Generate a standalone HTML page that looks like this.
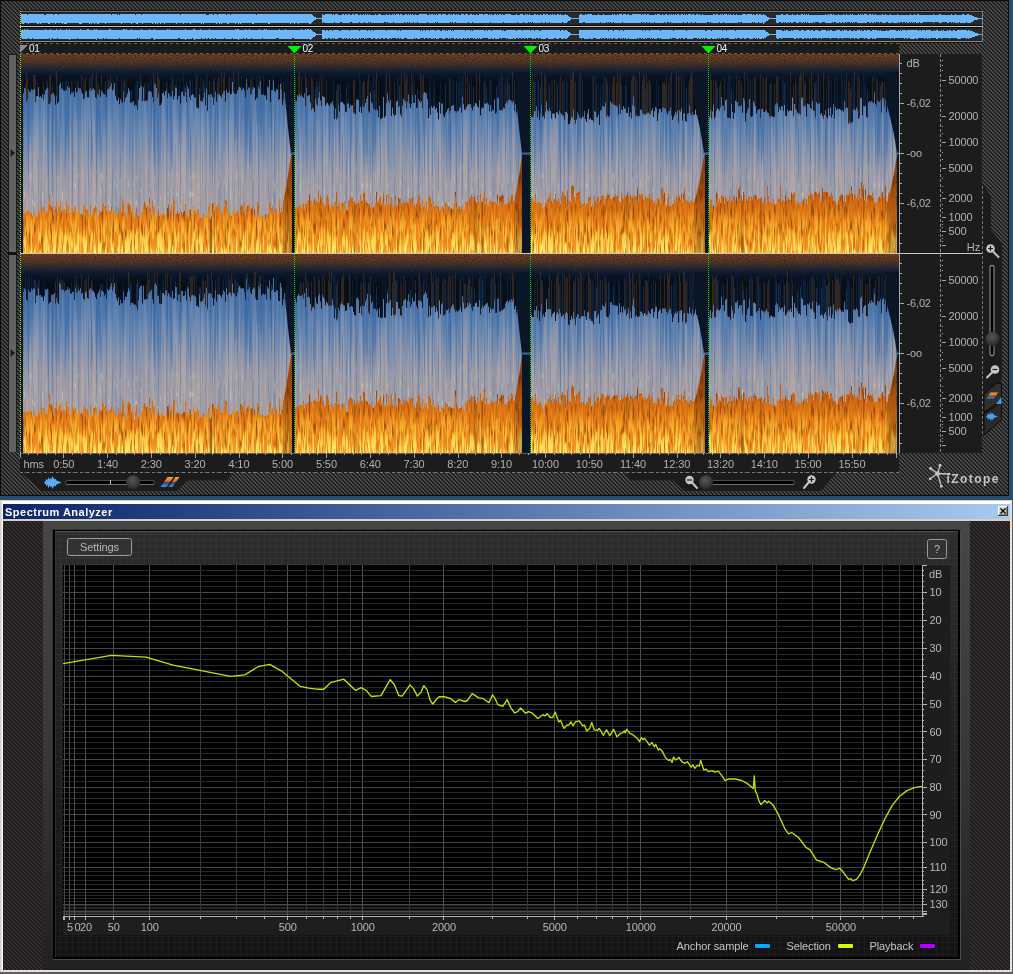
<!DOCTYPE html>
<html lang="en"><head><meta charset="utf-8"><title>Spectrum Analyzer</title>
<style>
html,body{margin:0;padding:0;}
body{width:1013px;height:974px;overflow:hidden;background:#2a4d6c;position:relative;font-family:"Liberation Sans",sans-serif;}
svg{position:absolute;left:0;display:block;opacity:0.999;}
svg text{font-family:"Liberation Sans",sans-serif;}
#top{top:0;}
#bot{top:500px;}
</style></head><body>
<svg id="top" width="1013" height="500" viewBox="0 0 1013 500"><defs><pattern id="hatch" width="4" height="4" patternUnits="userSpaceOnUse" shape-rendering="crispEdges"><rect width="4" height="4" fill="#1d1d1d"/><path d="M0 0h2v1h-2zM1 1h2v1h-2zM2 2h2v1h-2zM3 3h1v1h-1zM0 3h1v1h-1z" fill="#4b4b4b"/></pattern><radialGradient id="knob" cx="0.45" cy="0.35" r="0.7"><stop offset="0" stop-color="#565656"/><stop offset="0.7" stop-color="#343434"/><stop offset="1" stop-color="#1a1a1a"/></radialGradient><linearGradient id="sp" x1="0" y1="0" x2="0" y2="1"><stop offset="0" stop-color="#ffb020"/><stop offset="0.5" stop-color="#d06010"/><stop offset="0.55" stop-color="#2a4a80"/><stop offset="1" stop-color="#4a90e0"/></linearGradient><linearGradient id="gb" gradientUnits="userSpaceOnUse" x1="0" y1="0" x2="0" y2="199"><stop offset="0.18" stop-color="#416ea4"/><stop offset="0.3" stop-color="#4f78ab"/><stop offset="0.4" stop-color="#6685ae"/><stop offset="0.5" stop-color="#808fac"/><stop offset="0.6" stop-color="#9497a8"/><stop offset="0.72" stop-color="#a29ba4"/><stop offset="1" stop-color="#aca09e"/></linearGradient><linearGradient id="gl" gradientUnits="userSpaceOnUse" x1="0" y1="0" x2="0" y2="199"><stop offset="0.15" stop-color="#8aa0c4" stop-opacity="0.25"/><stop offset="0.3" stop-color="#98a2bc" stop-opacity="0.42"/><stop offset="0.45" stop-color="#aaa5b0" stop-opacity="0.62"/><stop offset="0.6" stop-color="#b4a7a8" stop-opacity="0.78"/><stop offset="1" stop-color="#bcaaa0" stop-opacity="0.82"/></linearGradient><linearGradient id="gbl" gradientUnits="userSpaceOnUse" x1="0" y1="0" x2="0" y2="199"><stop offset="0.15" stop-color="#305f9e" stop-opacity="0.7"/><stop offset="0.45" stop-color="#3a68a4" stop-opacity="0.65"/><stop offset="0.62" stop-color="#4673aa" stop-opacity="0.55"/><stop offset="0.8" stop-color="#5880b0" stop-opacity="0.42"/><stop offset="1" stop-color="#6286b2" stop-opacity="0.35"/></linearGradient><linearGradient id="gg" gradientUnits="userSpaceOnUse" x1="0" y1="0" x2="0" y2="199"><stop offset="0.48" stop-color="#c0dcc0" stop-opacity="0"/><stop offset="0.7" stop-color="#c0dcc0" stop-opacity="0.55"/><stop offset="1" stop-color="#c0dcc0" stop-opacity="0.6"/></linearGradient><linearGradient id="gf" gradientUnits="userSpaceOnUse" x1="0" y1="0" x2="0" y2="199"><stop offset="0.64" stop-color="#b4540e"/><stop offset="0.74" stop-color="#d06612"/><stop offset="0.84" stop-color="#e47816"/><stop offset="0.93" stop-color="#f08a1c"/><stop offset="1" stop-color="#f89c24"/></linearGradient><linearGradient id="gy" gradientUnits="userSpaceOnUse" x1="0" y1="0" x2="0" y2="199"><stop offset="0.7" stop-color="#ffb428" stop-opacity="0"/><stop offset="0.8" stop-color="#ffbc2c" stop-opacity="0.35"/><stop offset="0.9" stop-color="#ffd040" stop-opacity="0.85"/><stop offset="1" stop-color="#fff078" stop-opacity="1"/></linearGradient><linearGradient id="gd" gradientUnits="userSpaceOnUse" x1="0" y1="0" x2="0" y2="199"><stop offset="0.64" stop-color="#6e3004" stop-opacity="0.7"/><stop offset="0.9" stop-color="#823a06" stop-opacity="0.65"/><stop offset="1" stop-color="#984608" stop-opacity="0.5"/></linearGradient><linearGradient id="gt" gradientUnits="userSpaceOnUse" x1="0" y1="0" x2="0" y2="199"><stop offset="0" stop-color="#6c4326"/><stop offset="0.03" stop-color="#5f3c25"/><stop offset="0.055" stop-color="#40322b"/><stop offset="0.08" stop-color="#1b2438"/><stop offset="0.105" stop-color="#0a1628"/><stop offset="0.145" stop-color="#060e18"/><stop offset="0.4" stop-color="#07121f"/></linearGradient><filter id="nL" x="0" y="0" width="1" height="1" color-interpolation-filters="sRGB"><feTurbulence type="fractalNoise" baseFrequency="0.42 0.006" numOctaves="2" seed="4"/><feColorMatrix type="matrix" values="0 0 0 0 1 0 0 0 0 1 0 0 0 0 1 4.5 0 0 0 -1.85"/><feComposite in2="SourceGraphic" operator="arithmetic" k1="1" k2="0" k3="0" k4="0"/></filter><filter id="nB" x="0" y="0" width="1" height="1" color-interpolation-filters="sRGB"><feTurbulence type="fractalNoise" baseFrequency="0.5 0.008" numOctaves="2" seed="9"/><feColorMatrix type="matrix" values="0 0 0 0 1 0 0 0 0 1 0 0 0 0 1 0 5 0 0 -2.55"/><feComposite in2="SourceGraphic" operator="arithmetic" k1="1" k2="0" k3="0" k4="0"/></filter><filter id="nG" x="0" y="0" width="1" height="1" color-interpolation-filters="sRGB"><feTurbulence type="fractalNoise" baseFrequency="0.5 0.11" numOctaves="1" seed="21"/><feColorMatrix type="matrix" values="0 0 0 0 1 0 0 0 0 1 0 0 0 0 1 0 0 7 0 -4.4"/><feComposite in2="SourceGraphic" operator="arithmetic" k1="1" k2="0" k3="0" k4="0"/></filter><filter id="nY" x="0" y="0" width="1" height="1" color-interpolation-filters="sRGB"><feTurbulence type="fractalNoise" baseFrequency="0.55 0.045" numOctaves="2" seed="2"/><feColorMatrix type="matrix" values="0 0 0 0 1 0 0 0 0 1 0 0 0 0 1 5.5 0 0 0 -2.35"/><feComposite in2="SourceGraphic" operator="arithmetic" k1="1" k2="0" k3="0" k4="0"/></filter><filter id="nD" x="0" y="0" width="1" height="1" color-interpolation-filters="sRGB"><feTurbulence type="fractalNoise" baseFrequency="0.55 0.06" numOctaves="2" seed="13"/><feColorMatrix type="matrix" values="0 0 0 0 1 0 0 0 0 1 0 0 0 0 1 0 5 0 0 -2.6"/><feComposite in2="SourceGraphic" operator="arithmetic" k1="1" k2="0" k3="0" k4="0"/></filter><filter id="nS" x="0" y="0" width="1" height="1" color-interpolation-filters="sRGB"><feTurbulence type="fractalNoise" baseFrequency="0.9 0.9" numOctaves="1" seed="5"/><feColorMatrix type="matrix" values="0 0 0 0 1 0 0 0 0 1 0 0 0 0 1 6 0 0 0 -2.7"/><feComposite in2="SourceGraphic" operator="arithmetic" k1="1" k2="0" k3="0" k4="0"/></filter><linearGradient id="gs" gradientUnits="userSpaceOnUse" x1="0" y1="0" x2="0" y2="199"><stop offset="0" stop-color="#2a1608" stop-opacity="0.42"/><stop offset="0.06" stop-color="#1a1414" stop-opacity="0.4"/><stop offset="0.1" stop-color="#0a1424" stop-opacity="0.3"/><stop offset="0.13" stop-color="#0a1424" stop-opacity="0"/></linearGradient></defs><rect x="0" y="0" width="1009" height="496" fill="#0c0c0c"/><rect x="1" y="1" width="1007" height="494" fill="url(#hatch)"/><g shape-rendering="crispEdges"><rect x="20" y="10" width="963" height="33" fill="#141414"/><rect x="20" y="11" width="963" height="31" fill="#2a2a2a"/><rect x="20" y="11" width="963" height="1" fill="#747474"/><rect x="20" y="12" width="962" height="1" fill="#1c1c1c"/><rect x="20" y="24" width="962" height="1" fill="#222222"/><rect x="20" y="25" width="962" height="1" fill="#0c0c0c"/><rect x="20" y="26" width="962" height="1" fill="#c4c4c4"/><rect x="20" y="27" width="962" height="1" fill="#0c0c0c"/><rect x="20" y="28" width="962" height="1" fill="#222222"/><rect x="20" y="40" width="962" height="1" fill="#222222"/><rect x="20" y="41" width="963" height="1" fill="#8c8c8c"/><rect x="982" y="11" width="1" height="31" fill="#848484"/><path d="M21 18.6V13.9H22V13.7H23V13.8H24V14.3H25V14.2H26V13.7H27V14.5H28V13.8H29V13.8H30V14.1H31V14.2H32V14.2H33V14.3H34V14.1H35V14H36V14H37V13.6H38V13.8H39V13.9H40V13.6H41V14.3H42V14.4H43V13.9H44V14.5H45V14.5H46V14H47V14.1H48V13.7H49V13.9H50V14H51V14.1H52V14.3H53V14.5H54V14.3H55V13.9H56V14.3H57V14.2H58V14.5H59V13.8H60V14.4H61V14.3H62V13.7H63V14H64V13.7H65V13.9H66V13.8H67V14.4H68V14H69V14H70V13.7H71V14.2H72V14H73V14.4H74V14.2H75V14.2H76V14.4H77V13.8H78V14.2H79V13.6H80V14H81V14H82V13.9H83V13.9H84V14.4H85V14.1H86V14.3H87V14.1H88V14.4H89V13.6H90V14.3H91V13.9H92V14.2H93V13.7H94V13.9H95V14.4H96V13.7H97V13.6H98V13.7H99V14H100V14.4H101V14.3H102V13.7H103V14H104V14.3H105V13.7H106V13.9H107V14H108V14.2H109V14.1H110V14.3H111V14.5H112V13.7H113V14.1H114V14H115V14.2H116V13.8H117V14.5H118V14.2H119V14.5H120V14.4H121V13.6H122V13.9H123V14.1H124V14H125V13.7H126V14.2H127V14H128V13.9H129V14.2H130V14H131V13.8H132V13.7H133V14.4H134V13.7H135V14.5H136V13.8H137V13.8H138V14.4H139V14.1H140V13.8H141V14.5H142V13.9H143V13.8H144V14H145V13.8H146V14.3H147V14.3H148V14.2H149V14.3H150V14.2H151V13.6H152V14H153V14.2H154V14.3H155V13.6H156V14.1H157V13.6H158V14H159V14H160V13.7H161V13.8H162V14H163V14.1H164V13.7H165V14.1H166V13.7H167V14.4H168V14.1H169V14H170V13.6H171V14.3H172V13.8H173V13.9H174V13.9H175V13.9H176V13.6H177V14.2H178V14.1H179V14.3H180V14.5H181V14.3H182V13.7H183V13.7H184V14.4H185V14H186V14.1H187V14H188V13.9H189V14.2H190V13.6H191V14.1H192V13.9H193V13.9H194V14.3H195V14.4H196V14.1H197V13.8H198V13.8H199V13.8H200V14.4H201V13.7H202V13.8H203V13.7H204V14H205V13.7H206V14.5H207V14.5H208V14.5H209V14.3H210V14.3H211V14.3H212V14H213V14.5H214V14H215V14.4H216V13.9H217V14.5H218V14.2H219V13.7H220V14H221V13.8H222V13.9H223V14H224V14.3H225V14H226V14.5H227V13.8H228V13.6H229V13.7H230V14.5H231V14.2H232V14.2H233V14.4H234V13.9H235V13.8H236V14.2H237V13.7H238V13.8H239V14.4H240V13.8H241V13.7H242V14.3H243V14H244V13.9H245V14H246V14.4H247V13.9H248V13.9H249V13.8H250V13.8H251V14.2H252V13.9H253V13.7H254V13.7H255V14.4H256V14.5H257V13.9H258V14.3H259V14H260V13.6H261V14.2H262V14.3H263V14.1H264V13.9H265V14.4H266V14.2H267V14.4H268V13.9H269V13.8H270V14.2H271V14.2H272V14H273V14.3H274V14.3H275V14.2H276V14.1H277V14.4H278V13.8H279V14H280V14.2H281V14.4H282V13.8H283V14.4H284V14.4H285V14.4H286V14.4H287V13.7H288V14.3H289V14.2H290V13.8H291V13.9H292V14.3H293V14.1H294V13.7H295V14.2H296V13.9H297V14.4H298V13.8H299V13.8H300V13.8H301V13.9H302V14.2H303V14.4H304V14H305V13.8H306V14.3H307V14.3H308V14H309V13.8H310V13.5H311V14.3H312V15H313V15.8H314V16.6H315V17.3H316V18.1H317V18.1H318V18.1H319V18.1H320V18.1H321V18.1H322V14.1H323V14.8H324V14.7H325V14.2H326V14.3H327V14.3H328V14H329V14.1H330V14.1H331V14.2H332V14.5H333V14.3H334V14.7H335V14.2H336V14.2H337V14.3H338V14.5H339V14.6H340V14.5H341V14.9H342V14.1H343V14.4H344V14.6H345V14.4H346V14.3H347V14.6H348V14.2H349V14.1H350V14.6H351V14.8H352V14.2H353V14H354V14.8H355V14.3H356V14.2H357V14.1H358V14.8H359V14.8H360V14H361V14.8H362V14.7H363V14.4H364V14.5H365V14.2H366V14.7H367V14.1H368V14.7H369V14.2H370V14.8H371V14.5H372V14.9H373V14.6H374V14.6H375V14.3H376V14.5H377V14.8H378V14H379V14.1H380V14.1H381V14.7H382V14.5H383V14.7H384V14.8H385V14.9H386V14.4H387V14.8H388V14.7H389V14.1H390V14.5H391V14.7H392V14.3H393V14.7H394V14.4H395V14.6H396V14.4H397V14.3H398V14.4H399V14.5H400V14.2H401V14.1H402V14.7H403V14.8H404V14.8H405V14H406V14.1H407V14.7H408V14H409V14.7H410V14.4H411V14.5H412V14.1H413V14.9H414V14.6H415V14.4H416V14.8H417V14.7H418V14.5H419V14.1H420V14.2H421V14.2H422V14.2H423V14.3H424V14.1H425V14.3H426V14.2H427V14.6H428V14.7H429V14.2H430V14.8H431V14.1H432V14.4H433V14.6H434V14.1H435V14.8H436V14.4H437V14.8H438V14H439V14.4H440V14.2H441V14.6H442V14.2H443V14.3H444V14.3H445V14H446V14.5H447V14.5H448V14.3H449V14.1H450V14.6H451V14.3H452V14.7H453V14.4H454V14.2H455V14.8H456V14.2H457V14.9H458V14H459V14.5H460V14.5H461V14.3H462V14.4H463V14.2H464V14.8H465V14.4H466V14.4H467V14.1H468V14.9H469V14.5H470V14.3H471V14.4H472V14.8H473V14.4H474V14.7H475V14.7H476V14.1H477V14.7H478V14.5H479V14.2H480V14.3H481V14.4H482V14.2H483V14.5H484V14.3H485V14.2H486V14.3H487V14.3H488V14.5H489V14.4H490V14.5H491V14.2H492V14.6H493V14.5H494V14.2H495V14.4H496V14.6H497V14.2H498V14.6H499V14.1H500V14.2H501V14.5H502V14.3H503V14.9H504V14.5H505V14.1H506V14.4H507V14.4H508V14.3H509V14.3H510V14.4H511V14.5H512V14.7H513V14.6H514V14.6H515V14.5H516V14H517V14.6H518V14.5H519V14.6H520V14.4H521V14H522V14.1H523V14.6H524V14.7H525V14.1H526V14.5H527V14.3H528V14.8H529V14.1H530V14.6H531V14.5H532V14.7H533V14.5H534V14.2H535V14.2H536V14.5H537V14.2H538V14.5H539V14.6H540V14.4H541V14.7H542V14.6H543V14.3H544V14.2H545V14.8H546V14.2H547V14.2H548V14.5H549V14.8H550V14.3H551V14.7H552V14.3H553V14.6H554V14.3H555V14.7H556V14.5H557V14.4H558V14.3H559V14.7H560V14H561V14.6H562V14.6H563V14.7H564V14.8H565V13.9H566V14.6H567V15.3H568V16H569V16.7H570V17.4H571V18.1H572V18.1H573V18.1H574V18.1H575V18.1H576V18.1H577V18.1H578V18.1H579V14.5H580V14.2H581V14.3H582V14.7H583V14.8H584V14.6H585V14.2H586V14.5H587V14.1H588V14.3H589V14.3H590V14.2H591V14.2H592V14.6H593V14.7H594V14.5H595V14.5H596V14.8H597V14.5H598V14.3H599V14.8H600V14.8H601V14.7H602V14.6H603V14H604V14.9H605V14.7H606V14.8H607V14.5H608V14.9H609V14.5H610V14.8H611V14.7H612V14.2H613V14.7H614V14.3H615V14.5H616V14.5H617V14.2H618V14.8H619V14.1H620V14.1H621V14.3H622V14.9H623V14.3H624V14.4H625V14.2H626V14.7H627V14H628V14.1H629V14.8H630V14.6H631V14.9H632V14.2H633V14.1H634V14H635V14.3H636V14.3H637V14.3H638V14.4H639V14H640V14.4H641V14.6H642V14.4H643V14.9H644V14.2H645V14.3H646V14.5H647V14.1H648V14.2H649V14.6H650V14.8H651V14.8H652V14.7H653V14.6H654V14.5H655V14.1H656V14.6H657V14.1H658V14.3H659V14.1H660V14.5H661V14.9H662V14.2H663V14.7H664V14.8H665V14.2H666V14.3H667V14.7H668V14.7H669V14.1H670V14.7H671V14.3H672V14.8H673V14.2H674V14.8H675V14.4H676V14.9H677V14.4H678V14.1H679V14.8H680V14.7H681V14.2H682V14.4H683V14.6H684V14.3H685V14.5H686V14.1H687V14.6H688V14.2H689V14.3H690V14.2H691V14.6H692V14.2H693V14.3H694V14.6H695V14.9H696V14H697V14.3H698V14.7H699V14.2H700V14.6H701V14.5H702V14.1H703V14.5H704V14.6H705V14.6H706V14.8H707V14.7H708V14.7H709V14.7H710V14.8H711V14.5H712V14.7H713V14.2H714V14.1H715V14.7H716V14.4H717V14.4H718V14.8H719V14.8H720V14.1H721V14.5H722V14.2H723V14.8H724V14.4H725V14.1H726V14.1H727V14.9H728V14.4H729V14.6H730V14.2H731V14.8H732V14.7H733V14.2H734V14.5H735V14.5H736V14H737V14.6H738V14.9H739V14.5H740V14.8H741V14.8H742V14.4H743V14H744V14.4H745V14.3H746V14.6H747V14.4H748V14.2H749V14.4H750V14.2H751V14.4H752V14.7H753V14.4H754V14.5H755V14.8H756V14.3H757V14.2H758V14.8H759V14.4H760V14.2H761V14.5H762V14.7H763V13.9H764V14.6H765V15.3H766V16H767V16.7H768V17.4H769V18.1H770V18.1H771V18.1H772V18.1H773V18.1H774V18.1H775V18.1H776V14.8H777V14.6H778V14.5H779V14.6H780V15H781V14.4H782V14.3H783V15H784V14.9H785V14.9H786V14.3H787V14.3H788V15.1H789V14.8H790V14.9H791V14.7H792V14.3H793V15H794V14.9H795V14.7H796V14.6H797V14.4H798V14.7H799V15H800V14.8H801V14.2H802V14.4H803V15H804V14.4H805V14.8H806V14.4H807V15.1H808V14.3H809V15H810V14.7H811V14.5H812V14.6H813V15H814V15H815V14.8H816V15.1H817V14.9H818V15H819V14.7H820V14.8H821V14.6H822V14.8H823V15.1H824V14.8H825V14.4H826V14.9H827V14.7H828V14.4H829V14.7H830V14.3H831V14.3H832V14.8H833V14.4H834V14.9H835V15H836V14.7H837V14.6H838V14.3H839V15H840V14.5H841V14.7H842V15H843V14.2H844V14.5H845V15H846V14.3H847V15H848V15H849V14.8H850V14.3H851V15.1H852V14.3H853V14.5H854V15H855V14.6H856V14.7H857V14.6H858V14.4H859V14.5H860V14.2H861V15H862V14.4H863V14.7H864V14.4H865V14.3H866V14.2H867V14.9H868V14.7H869V14.3H870V14.2H871V14.8H872V14.3H873V14.7H874V14.8H875V14.4H876V14.7H877V14.7H878V14.8H879V14.7H880V15H881V15H882V14.4H883V14.6H884V14.5H885V14.4H886V14.9H887V14.9H888V14.8H889V14.8H890V14.4H891V14.8H892V14.8H893V14.5H894V14.9H895V15H896V14.5H897V14.4H898V14.8H899V14.5H900V15.1H901V14.7H902V14.6H903V14.9H904V14.8H905V14.6H906V14.6H907V15H908V14.5H909V15H910V14.2H911V14.9H912V14.9H913V14.9H914V14.2H915V14.8H916V14.6H917V14.2H918V14.2H919V15.1H920V14.6H921V14.6H922V14.5H923V14.8H924V14.8H925V15.1H926V15.1H927V14.6H928V15H929V14.9H930V14.8H931V15H932V15.1H933V14.3H934V14.7H935V14.9H936V14.5H937V15.1H938V14.9H939V14.2H940V14.3H941V14.5H942V15H943V14.8H944V15.1H945V14.9H946V15.1H947V15H948V14.5H949V15H950V15H951V14.3H952V14.8H953V14.8H954V15H955V14.4H956V14.5H957V14.6H958V14.5H959V15H960V14.9H961V14.6H962V14.2H963V14.4H964V14.5H965V14.6H966V15.1H967V14.3H968V14.1H969V14.5H970V14.9H971V15.3H972V15.7H973V16.1H974V16.5H975V16.9H976V17.3H977V17.7H978V18.1H979V18.1H980V18.1H981V18.1H982V18.6V18.8H981V18.9H980V19.2H979V19.3H978V19.7H977V19.9H976V20.1H975V20.4H974V21.3H973V21.8H972V21.7H971V22.5H970V22.6H969V23H968V22.9H967V21.8H966V22.5H965V22.5H964V23H963V23H962V22.8H961V22.6H960V22.1H959V22.5H958V22.9H957V22.7H956V22.6H955V21.9H954V22.7H953V22.4H952V22.6H951V22.2H950V22.2H949V22.6H948V22.5H947V22.4H946V22.1H945V21.9H944V22.3H943V22.4H942V22.7H941V23H940V23H939V22.1H938V22.3H937V22.4H936V22.4H935V22.3H934V22.9H933V22.4H932V22.2H931V22.1H930V22.2H929V22.3H928V22.3H927V22H926V21.8H925V22.4H924V22.3H923V22.7H922V22.5H921V22.7H920V21.9H919V23.2H918V23.3H917V22.6H916V22.3H915V23.2H914V22.2H913V22.5H912V22.2H911V23.1H910V22.1H909V22.8H908V22.5H907V22.4H906V22.8H905V22.4H904V22.3H903V22.5H902V22.2H901V22H900V22.7H899V22.1H898V22.9H897V23H896V22.5H895V22.5H894V22.9H893V22.2H892V22.7H891V22.6H890V22.6H889V22.6H888V22.4H887V22.3H886V22.6H885V22.7H884V22.5H883V22.6H882V21.9H881V22.4H880V22.7H879V22.2H878V22.2H877V22.4H876V22.6H875V22.3H874V22.5H873V22.9H872V22.4H871V22.8H870V23H869V22.4H868V22.3H867V23H866V23.1H865V22.7H864V22.6H863V22.7H862V22.5H861V22.9H860V22.7H859V23H858V22.7H857V22.3H856V22.4H855V22.5H854V22.4H853V22.8H852V22.4H851V22.7H850V22.2H849V22H848V21.9H847V22.9H846V22.3H845V22.6H844V22.7H843V22.4H842V22.7H841V22.8H840V22H839V23H838V22.7H837V22.5H836V22.4H835V22.3H834V22.8H833V22.1H832V23H831V23.1H830V22.6H829V22.6H828V22.8H827V22.5H826V22.7H825V22.3H824V22.3H823V22.2H822V22.7H821V22.6H820V22.5H819V22.4H818V22.3H817V22.1H816V22.2H815V22.5H814V22.1H813V22.7H812V22.6H811V22.8H810V22.5H809V22.6H808V22.4H807V22.9H806V22.1H805V22.8H804V21.9H803V22.8H802V22.8H801V22.3H800V22.1H799V22.6H798V23H797V22.8H796V22.4H795V22.3H794V21.9H793V22.9H792V22.8H791V22H790V22.6H789V22.2H788V22.8H787V23H786V22.1H785V22.6H784V21.9H783V22.7H782V23H781V22.2H780V22.4H779V22.7H778V22.5H777V22.5H776V19.2H775V19.3H774V18.8H773V19.2H772V19.4H771V19.1H770V19.3H769V19.6H768V20.7H767V21.2H766V22.1H765V22.8H764V23.5H763V22.3H762V22.8H761V22.8H760V22.6H759V22.3H758V23.1H757V22.9H756V22.7H755V22.4H754V22.6H753V22.4H752V23H751V23.1H750V22.8H749V23.1H748V22.9H747V22.5H746V22.6H745V22.8H744V23.4H743V22.9H742V22.1H741V22.4H740V22.6H739V22.4H738V22.6H737V23.4H736V22.6H735V22.7H734V23.1H733V22.8H732V22.5H731V23H730V22.8H729V22.8H728V22.6H727V22.9H726V22.9H725V23H724V22.2H723V23.2H722V22.8H721V23.1H720V22.2H719V22.5H718V22.5H717V23.1H716V22.8H715V23H714V22.7H713V22.7H712V22.7H711V22.1H710V22.5H709V22.4H708V22.4H707V22.5H706V22.8H705V22.7H704V22.5H703V23.1H702V22.7H701V22.8H700V22.7H699V22.5H698V23.2H697V23.1H696V22.2H695V22.7H694V22.8H693V23.2H692V22.4H691V22.8H690V22.6H689V23.1H688V22.4H687V23.3H686V22.9H685V23.1H684V22.4H683V22.5H682V22.9H681V22.8H680V22.5H679V22.8H678V22.9H677V22.6H676V23H675V22.5H674V23.3H673V22.6H672V22.8H671V22.3H670V23.3H669V22.3H668V22.4H667V23.2H666V23.1H665V22.4H664V22.8H663V22.9H662V22.6H661V22.9H660V23H659V22.8H658V22.9H657V22.8H656V22.9H655V22.4H654V22.8H653V22.5H652V22.5H651V22.5H650V22.3H649V22.7H648V23.1H647V22.4H646V22.9H645V23.1H644V22.4H643V22.8H642V22.3H641V22.7H640V23.4H639V22.6H638V22.9H637V22.6H636V23.1H635V23H634V23.1H633V23.1H632V22.5H631V22.8H630V22.5H629V23H628V22.9H627V22.6H626V23.3H625V22.6H624V23.1H623V22.2H622V22.9H621V23.1H620V23.2H619V22.7H618V23.1H617V22.6H616V22.8H615V22.8H614V22.4H613V22.9H612V22.5H611V22.3H610V22.6H609V22.1H608V22.7H607V22.3H606V22.7H605V22.5H604V23.1H603V22.6H602V22.7H601V22.3H600V22.5H599V22.8H598V22.8H597V22.7H596V22.5H595V23H594V22.6H593V22.8H592V23.1H591V23.2H590V22.8H589V23H588V23H587V22.7H586V23.1H585V22.4H584V22.2H583V22.7H582V23.1H581V23.1H580V22.6H579V19.2H578V18.9H577V19.2H576V19.1H575V19.2H574V19.1H573V18.9H572V19.2H571V19.8H570V20.6H569V21.1H568V21.7H567V22.6H566V23.4H565V22.6H564V22.8H563V22.3H562V22.7H561V23H560V22.6H559V22.8H558V22.7H557V22.7H556V22.6H555V23H554V22.7H553V23H552V22.5H551V23H550V22.3H549V22.8H548V23H547V23H546V22.1H545V23H544V22.8H543V22.5H542V22.2H541V22.9H540V22.9H539V22.6H538V22.8H537V22.8H536V22.8H535V23.3H534V22.5H533V22.4H532V22.7H531V22.4H530V23H529V22.2H528V23H527V23H526V23H525V22.7H524V22.4H523V23.1H522V23.1H521V22.7H520V22.8H519V22.9H518V22.4H517V23.1H516V22.9H515V22.9H514V22.6H513V22.7H512V23H511V23H510V23H509V22.7H508V22.7H507V22.9H506V23.3H505V22.5H504V22.3H503V22.7H502V22.8H501V23H500V23.2H499V22.5H498V23.1H497V22.7H496V22.7H495V22.8H494V22.7H493V22.8H492V22.8H491V22.4H490V22.8H489V22.5H488V23.1H487V23.1H486V23.3H485V23.1H484V22.8H483V22.8H482V23H481V23.1H480V23.1H479V22.8H478V22.7H477V23H476V22.6H475V22.5H474V22.7H473V22.3H472V22.6H471V22.9H470V22.6H469V22.3H468V23.3H467V22.9H466V22.9H465V22.7H464V22.8H463V22.8H462V22.7H461V22.6H460V23H459V22.9H458V22.5H457V23.2H456V22.4H455V23.2H454V22.8H453V22.4H452V22.9H451V22.4H450V22.9H449V22.8H448V23H447V22.6H446V23H445V23.1H444V22.7H443V23.3H442V22.8H441V23.1H440V22.8H439V23H438V22.1H437V22.5H436V22.3H435V23.1H434V22.9H433V22.9H432V23.4H431V22.6H430V22.8H429V22.5H428V22.4H427V22.7H426V23.2H425V23H424V22.8H423V22.7H422V23.1H421V23H420V22.8H419V22.8H418V22.4H417V22.5H416V22.8H415V22.6H414V22.3H413V23.2H412V23H411V22.9H410V22.2H409V23.2H408V22.3H407V22.9H406V23H405V22.3H404V22.7H403V22.6H402V23.3H401V23.1H400V22.5H399V22.7H398V22.8H397V22.6H396V22.5H395V22.9H394V22.3H393V22.8H392V22.5H391V22.8H390V23.2H389V22.6H388V22.2H387V22.6H386V22.2H385V22.3H384V22.7H383V23H382V22.6H381V22.8H380V23H379V23.4H378V22.6H377V22.8H376V22.9H375V22.5H374V22.7H373V22.5H372V22.6H371V22.2H370V22.7H369V22.3H368V23.3H367V22.5H366V23.3H365V22.4H364V22.7H363V22.6H362V22.5H361V22.9H360V22.3H359V22.5H358V23.2H357V23H356V22.8H355V22.7H354V23.2H353V23.1H352V22.4H351V22.4H350V23H349V22.8H348V22.5H347V22.8H346V22.7H345V22.5H344V22.7H343V23.3H342V22H341V22.4H340V22.8H339V22.7H338V22.9H337V22.8H336V23H335V22.3H334V23.1H333V22.8H332V22.9H331V22.8H330V23.4H329V23.1H328V23H327V23.1H326V23.2H325V22.7H324V22.4H323V23.3H322V19.1H321V19H320V19.1H319V19H318V19.3H317V19.3H316V19.7H315V20.4H314V21.3H313V22.1H312V23.2H311V24H310V23.7H309V23.3H308V23H307V22.7H306V23.3H305V22.9H304V23H303V22.9H302V23.1H301V23.3H300V23.3H299V23.5H298V22.5H297V23.2H296V23.3H295V23.7H294V23.2H293V22.9H292V23.1H291V23.7H290V23.1H289V23H288V23.3H287V22.6H286V22.7H285V22.7H284V22.6H283V23.3H282V22.7H281V22.8H280V23.2H279V23.3H278V22.7H277V23.2H276V23H275V22.7H274V23.1H273V23.2H272V23H271V23.2H270V23.6H269V23.5H268V23H267V23.1H266V22.9H265V23.1H264V23.2H263V22.8H262V22.9H261V23.3H260V23.1H259V22.6H258V23.4H257V22.9H256V23H255V23.3H254V23.6H253V23.6H252V22.7H251V23.2H250V23.3H249V23.2H248V23.1H247V22.8H246V23.2H245V23.4H244V23.2H243V23H242V23.3H241V23.5H240V23H239V23.6H238V23.2H237V23.3H236V23.5H235V23.1H234V22.8H233V23H232V23H231V22.6H230V23.3H229V23.5H228V23.6H227V22.7H226V22.9H225V22.8H224V23.1H223V23H222V23.7H221V23.1H220V23.6H219V22.9H218V22.5H217V23.6H216V23.1H215V23H214V22.7H213V23.1H212V22.7H211V23H210V23.1H209V22.9H208V22.8H207V22.5H206V23.4H205V23.2H204V23.6H203V23.4H202V23.5H201V23H200V23.1H199V23.3H198V23.3H197V23.4H196V22.6H195V22.6H194V23.2H193V23.4H192V22.9H191V23.8H190V22.8H189V23.4H188V23H187V23.4H186V23.1H185V22.9H184V23.7H183V23.4H182V22.6H181V22.8H180V22.9H179V23H178V23.2H177V23.6H176V23.3H175V23.3H174V23.3H173V23.4H172V22.7H171V23.4H170V23H169V22.9H168V22.9H167V23.3H166V22.9H165V23.5H164V23H163V23.1H162V23.3H161V23.5H160V23.3H159V23.4H158V23.8H157V23.1H156V23.5H155V22.9H154V22.8H153V23.5H152V23.3H151V22.8H150V23H149V23.1H148V22.7H147V23.2H146V23.3H145V23.2H144V23.2H143V23.5H142V22.5H141V23.4H140V23.3H139V23.1H138V23.7H137V23.6H136V22.5H135V23.3H134V22.8H133V23.3H132V23.7H131V22.9H130V22.9H129V23.1H128V22.9H127V23H126V23.2H125V23.4H124V23.2H123V23.2H122V23.8H121V23H120V22.6H119V23.2H118V23H117V23.4H116V22.9H115V23.4H114V23.4H113V23.4H112V22.5H111V23.1H110V23.2H109V22.9H108V23.3H107V23.2H106V23.7H105V22.8H104V23H103V23.3H102V22.8H101V23.1H100V23H99V23.5H98V23.8H97V23.2H96V22.7H95V23.5H94V23.2H93V23.2H92V23.5H91V22.7H90V23.6H89V22.8H88V23.2H87V22.8H86V23H85V22.7H84V23.2H83V23.1H82V23.5H81V23.5H80V23.5H79V23.2H78V23.4H77V22.7H76V22.9H75V23.3H74V22.7H73V23.3H72V23.3H71V23.4H70V23.3H69V23H68V22.9H67V23.6H66V23.5H65V23.7H64V23.3H63V23.8H62V22.8H61V22.9H60V23.3H59V22.5H58V23H57V23H56V23.5H55V22.6H54V23H53V22.8H52V23H51V23.4H50V23.5H49V23.7H48V23H47V23.1H46V22.9H45V22.7H44V23.4H43V23H42V22.9H41V23.8H40V23.2H39V23.6H38V23.7H37V23.1H36V23.2H35V23.2H34V23H33V22.7H32V23.3H31V23.4H30V23.1H29V23.7H28V22.7H27V23.3H26V23.2H25V22.9H24V23.5H23V23.7H22V23.3H21Z" fill="#6cb6fa"/><path d="M21 34.3V30.2H22V29.5H23V29.6H24V29.4H25V30H26V29.5H27V29.4H28V29.9H29V29.8H30V29.9H31V30.2H32V30H33V29.9H34V30.1H35V29.5H36V29.8H37V29.7H38V29.9H39V29.9H40V29.5H41V29.8H42V29.7H43V29.8H44V29.7H45V29.4H46V30H47V29.7H48V29.6H49V30.1H50V29.3H51V29.8H52V30H53V29.5H54V29.5H55V29.6H56V29.4H57V30.1H58V29.7H59V29.5H60V29.4H61V29.6H62V29.7H63V29.9H64V29.7H65V29.7H66V29.4H67V29.5H68V29.5H69V29.4H70V30.1H71V29.5H72V29.8H73V29.5H74V29.9H75V29.8H76V29.5H77V30.2H78V29.9H79V29.8H80V29.4H81V30H82V29.5H83V30H84V29.9H85V29.7H86V29.6H87V29.4H88V29.4H89V30H90V29.5H91V29.6H92V29.9H93V29.5H94V29.4H95V29.8H96V29.4H97V30.1H98V30.1H99V29.5H100V29.9H101V29.7H102V29.8H103V30.1H104V29.5H105V29.5H106V30.1H107V30H108V29.5H109V29.4H110V29.4H111V29.7H112V29.9H113V29.8H114V30H115V29.8H116V30H117V30.1H118V29.9H119V30.1H120V29.8H121V29.6H122V29.6H123V29.3H124V29.4H125V29.6H126V29.4H127V29.8H128V29.5H129V29.9H130V29.7H131V29.3H132V29.7H133V29.7H134V29.5H135V29.9H136V29.5H137V30.2H138V30H139V30H140V30H141V29.3H142V30.2H143V29.9H144V29.7H145V29.6H146V29.5H147V29.9H148V30H149V29.4H150V30.1H151V30.1H152V30H153V29.8H154V29.4H155V29.5H156V29.7H157V29.7H158V29.6H159V29.6H160V29.9H161V30.1H162V30H163V29.5H164V29.6H165V29.5H166V30.2H167V29.4H168V29.9H169V29.4H170V29.7H171V29.7H172V29.5H173V29.6H174V29.6H175V30.1H176V29.7H177V29.9H178V30.1H179V30.1H180V29.8H181V30H182V29.5H183V30.1H184V30.2H185V29.3H186V29.9H187V29.7H188V30H189V30H190V29.8H191V29.5H192V30.2H193V29.4H194V29.3H195V29.7H196V29.9H197V30H198V30H199V29.9H200V29.4H201V30.2H202V29.5H203V29.6H204V30.2H205V30.1H206V29.5H207V29.6H208V29.9H209V29.4H210V30H211V29.8H212V30.1H213V29.6H214V30.1H215V30H216V29.5H217V29.7H218V29.6H219V29.5H220V29.7H221V30H222V29.6H223V30.1H224V30H225V29.8H226V30.1H227V30.1H228V29.6H229V29.5H230V29.9H231V29.8H232V30H233V29.7H234V29.7H235V29.4H236V30.2H237V29.4H238V29.3H239V29.9H240V29.5H241V29.5H242V29.6H243V29.9H244V29.6H245V29.4H246V30.1H247V29.8H248V30.2H249V29.4H250V29.5H251V30.2H252V29.5H253V29.6H254V30.1H255V29.7H256V29.6H257V29.9H258V29.7H259V29.3H260V29.6H261V29.7H262V30.1H263V30.1H264V29.4H265V29.5H266V29.4H267V29.7H268V29.7H269V29.7H270V29.5H271V29.9H272V29.8H273V29.8H274V29.6H275V30H276V30.2H277V30.1H278V30H279V29.4H280V29.6H281V29.5H282V29.8H283V30.1H284V29.8H285V29.4H286V29.7H287V29.6H288V29.9H289V30.1H290V29.6H291V29.8H292V29.9H293V30H294V29.6H295V29.9H296V29.7H297V30H298V29.5H299V29.9H300V29.8H301V29.4H302V29.6H303V29.5H304V29.9H305V29.4H306V29.9H307V29.3H308V29.4H309V29.6H310V29.2H311V30H312V30.7H313V31.5H314V32.3H315V33H316V33.8H317V33.8H318V33.8H319V33.8H320V33.8H321V33.8H322V29.9H323V30.1H324V29.9H325V30.5H326V29.7H327V29.9H328V30.5H329V30.4H330V30.1H331V29.9H332V30.5H333V29.7H334V30.3H335V29.7H336V29.9H337V30.2H338V30.3H339V30.5H340V30.5H341V30H342V29.9H343V29.8H344V30.3H345V29.8H346V30.3H347V29.8H348V29.8H349V30.5H350V29.8H351V30H352V30H353V29.8H354V30.1H355V30.1H356V30.3H357V29.8H358V29.8H359V30.5H360V29.9H361V30.4H362V30.4H363V30.4H364V30.1H365V30.3H366V30.4H367V30.5H368V30.3H369V29.9H370V30.6H371V30.2H372V30.1H373V30.6H374V30.3H375V29.8H376V29.7H377V29.8H378V30.4H379V29.9H380V30.2H381V30.4H382V30.2H383V29.8H384V29.8H385V30.2H386V30.5H387V29.8H388V29.7H389V30.1H390V30.4H391V30.1H392V30H393V30.2H394V30.3H395V30.4H396V30.3H397V30.6H398V30.4H399V29.7H400V30.6H401V29.9H402V29.9H403V30.2H404V30.1H405V30.4H406V30H407V30H408V29.9H409V30.2H410V29.7H411V29.8H412V30.1H413V30H414V30.4H415V29.8H416V30H417V29.8H418V30.3H419V29.7H420V30.5H421V30.1H422V30.5H423V30.4H424V29.9H425V30.5H426V30.3H427V30.4H428V29.8H429V30.5H430V30.3H431V29.8H432V30H433V30H434V29.7H435V30.6H436V30H437V29.9H438V29.9H439V30H440V30.5H441V30.5H442V29.9H443V30H444V30.4H445V30.6H446V30.1H447V30.5H448V29.9H449V30.3H450V29.9H451V30.5H452V30.2H453V30.5H454V29.9H455V30.1H456V30.4H457V29.7H458V30H459V30.3H460V29.8H461V30.3H462V29.8H463V30.3H464V29.7H465V30.5H466V29.9H467V30.3H468V30.2H469V30H470V30.6H471V30.4H472V30.5H473V29.9H474V30.4H475V30.2H476V30.3H477V30.4H478V29.8H479V30.1H480V30H481V30H482V29.9H483V30.4H484V30.5H485V30.2H486V30.4H487V30.6H488V29.8H489V30H490V30.2H491V30.5H492V29.9H493V30.1H494V30.4H495V29.7H496V29.7H497V29.8H498V29.9H499V30.1H500V30.3H501V30H502V30.5H503V30H504V30.5H505V30.6H506V30H507V30.3H508V30H509V29.9H510V29.8H511V30H512V29.8H513V30H514V29.8H515V29.8H516V30.6H517V30.4H518V30.3H519V30.4H520V30.4H521V29.8H522V30.6H523V30.4H524V29.9H525V30.4H526V30.4H527V29.7H528V29.9H529V30.2H530V30.5H531V30.4H532V29.7H533V29.9H534V30.5H535V30H536V30.3H537V30H538V30.3H539V30.5H540V30.6H541V30.3H542V29.8H543V29.8H544V30H545V29.9H546V30.4H547V30.3H548V29.8H549V29.7H550V30.2H551V29.9H552V29.8H553V29.7H554V30.3H555V30H556V30.2H557V30.2H558V30.2H559V30.3H560V30.6H561V29.9H562V30H563V29.8H564V30.5H565V29.6H566V30.3H567V31H568V31.7H569V32.4H570V33.1H571V33.8H572V33.8H573V33.8H574V33.8H575V33.8H576V33.8H577V33.8H578V33.8H579V30.4H580V30.1H581V29.8H582V30.2H583V30.4H584V30.1H585V29.7H586V29.8H587V29.8H588V30.2H589V30.4H590V29.8H591V29.9H592V29.8H593V30.2H594V30.3H595V30.4H596V29.8H597V29.8H598V30.3H599V29.8H600V30.3H601V30.2H602V30.1H603V30.4H604V30.4H605V30.4H606V30.4H607V30.1H608V30.5H609V29.9H610V30.4H611V30.2H612V30H613V30.5H614V30.2H615V30.1H616V30.1H617V29.8H618V29.9H619V30.5H620V29.9H621V30.1H622V30H623V30.5H624V30.2H625V30H626V29.9H627V29.9H628V30.4H629V29.9H630V30.1H631V30H632V29.8H633V30.2H634V29.8H635V29.8H636V29.9H637V30.3H638V30.1H639V30.4H640V29.9H641V29.8H642V30.5H643V29.9H644V30H645V30.6H646V29.8H647V30.2H648V30.4H649V30.6H650V29.9H651V30.3H652V30.1H653V30.4H654V30.1H655V30.2H656V29.9H657V30H658V30H659V30.4H660V30.5H661V29.8H662V29.8H663V30H664V29.8H665V30H666V30.1H667V30.2H668V30.3H669V30.2H670V30.4H671V30.2H672V30.1H673V30.6H674V30.2H675V30.3H676V30H677V29.9H678V30H679V30H680V30H681V30.4H682V30.3H683V29.8H684V29.7H685V30.4H686V30.6H687V29.7H688V29.8H689V30.1H690V29.9H691V30.1H692V29.8H693V30.4H694V30.2H695V30H696V30.4H697V30H698V30.4H699V30H700V29.9H701V30.2H702V29.7H703V30H704V29.9H705V30.6H706V30.5H707V30H708V29.8H709V30H710V29.8H711V30.5H712V29.8H713V29.8H714V30H715V30.2H716V30H717V30.4H718V30H719V30H720V30.1H721V30.4H722V30.6H723V30.4H724V29.8H725V30.4H726V30.5H727V30.4H728V30.1H729V30.1H730V29.8H731V29.8H732V29.7H733V29.8H734V30.2H735V30.5H736V29.7H737V30.4H738V30H739V30.4H740V29.9H741V30.4H742V30.2H743V30.4H744V29.8H745V30H746V30H747V30.3H748V30.4H749V29.8H750V29.9H751V29.9H752V29.7H753V30.1H754V30.4H755V30.1H756V30.3H757V30.1H758V30.2H759V30.1H760V29.8H761V29.9H762V30.2H763V29.6H764V30.3H765V31H766V31.7H767V32.4H768V33.1H769V33.8H770V33.8H771V33.8H772V33.8H773V33.8H774V33.8H775V33.8H776V30.1H777V30H778V30.1H779V30.3H780V30H781V30.4H782V30.7H783V30.6H784V30.2H785V30.5H786V30.4H787V30.4H788V30.6H789V30.7H790V30.8H791V30.2H792V30.5H793V30.4H794V30H795V30.2H796V30.1H797V30.1H798V29.9H799V30.7H800V30.5H801V29.9H802V30.4H803V29.9H804V30.6H805V30.7H806V30H807V30.4H808V30.3H809V30H810V30.6H811V29.9H812V30.4H813V30.6H814V30.6H815V30.3H816V30.4H817V30H818V30.8H819V30.8H820V30.7H821V30.3H822V30.1H823V30.4H824V30.2H825V30.2H826V30.8H827V30.6H828V29.9H829V30.5H830V29.9H831V30.4H832V30.6H833V30.8H834V30.6H835V30.5H836V30.4H837V30.4H838V30.3H839V30.4H840V30.8H841V30.6H842V29.9H843V30.8H844V30.1H845V30.4H846V30.2H847V30.5H848V30.5H849V30.3H850V30H851V30.5H852V30.7H853V30.8H854V30H855V30.5H856V30.7H857V30.3H858V30H859V30.3H860V30.7H861V30.4H862V30.6H863V30.8H864V29.9H865V30.4H866V30.7H867V30H868V29.9H869V30.1H870V30.6H871V30.6H872V30.3H873V30.3H874V30H875V29.9H876V30H877V30.5H878V30.3H879V30.7H880V30.3H881V30.7H882V30.7H883V30.7H884V30.5H885V30.5H886V30.2H887V30.7H888V30.7H889V30.2H890V30.2H891V30.2H892V30.2H893V30.2H894V30.3H895V30.1H896V30.7H897V30.6H898V30.1H899V30.6H900V30.3H901V30.6H902V30.4H903V30H904V30.2H905V30.4H906V30.6H907V30.1H908V30.2H909V30.4H910V30H911V30.2H912V29.9H913V30.2H914V30H915V30.3H916V30.2H917V30H918V30.7H919V30.4H920V30.3H921V30.7H922V30.1H923V30.2H924V30H925V30.5H926V30.4H927V30H928V30.4H929V30H930V30.4H931V30.5H932V30.6H933V30.6H934V30.4H935V30.7H936V30.1H937V29.9H938V30.7H939V30.8H940V30.8H941V30H942V30.7H943V30.2H944V30.5H945V30.6H946V30.6H947V30.2H948V30.8H949V30H950V30.3H951V30.6H952V30.6H953V30.2H954V30.2H955V30.5H956V30.5H957V30.4H958V30H959V30.3H960V30H961V30.2H962V30.3H963V30.4H964V30.2H965V30.4H966V30.1H967V30.6H968V29.8H969V30.2H970V30.6H971V31H972V31.4H973V31.8H974V32.2H975V32.6H976V33H977V33.4H978V33.8H979V33.8H980V33.8H981V33.8H982V34.3V34.7H981V35H980V34.7H979V35H978V35.5H977V35.6H976V35.8H975V36.6H974V36.9H973V37.1H972V37.8H971V38H970V38.1H969V38.5H968V37.8H967V38.5H966V38.4H965V38.2H964V38H963V38.4H962V38.3H961V38.5H960V38.5H959V38.9H958V38.5H957V38.3H956V37.8H955V38.2H954V38.4H953V38.3H952V37.8H951V38.3H950V38.5H949V37.8H948V38.3H947V37.9H946V37.8H945V37.8H944V38.4H943V37.8H942V38.8H941V37.9H940V38.1H939V37.8H938V38.9H937V38.5H936V38H935V38.4H934V37.9H933V38H932V38.2H931V37.9H930V38.6H929V37.9H928V38.5H927V38.3H926V38.4H925V38.9H924V38.3H923V38.3H922V37.9H921V38.3H920V38.2H919V38H918V38.7H917V38.5H916V38.4H915V38.7H914V38.5H913V38.9H912V38.7H911V38.9H910V38.4H909V38.2H908V38.5H907V38.2H906V38.1H905V38.5H904V38.3H903V38H902V38H901V38H900V37.9H899V38.3H898V38.2H897V37.8H896V38.4H895V38.5H894V38.4H893V38.2H892V38.3H891V38.5H890V38.2H889V37.7H888V37.9H887V38.4H886V37.9H885V38.1H884V38H883V37.6H882V37.7H881V38.2H880V38.1H879V38.1H878V38H877V38.4H876V38.8H875V38.8H874V38.1H873V38.5H872V38.1H871V37.9H870V38.8H869V38.6H868V38.8H867V37.7H866V38.2H865V38.7H864V38.1H863V38.2H862V38.2H861V37.7H860V38.3H859V38.5H858V38.6H857V38H856V38H855V38.5H854V38H853V37.6H852V38.3H851V38.7H850V38.2H849V38.3H848V38H847V38.2H846V38.2H845V38.2H844V37.6H843V38.6H842V38.2H841V37.7H840V38.2H839V38.6H838V38.4H837V38.4H836V38.2H835V38H834V37.9H833V38.1H832V38.2H831V38.6H830V37.9H829V38.4H828V37.9H827V38H826V38.4H825V38.2H824V38.4H823V38.2H822V38.6H821V38H820V37.9H819V37.8H818V38.8H817V37.9H816V38H815V38H814V37.9H813V38.1H812V38.7H811V37.7H810V38.9H809V38.4H808V37.9H807V38.7H806V37.9H805V38.1H804V38.8H803V38.5H802V38.4H801V38.4H800V37.8H799V38.5H798V38.4H797V38.4H796V38.6H795V38.7H794V38H793V38.2H792V38.4H791V38H790V37.6H789V38.2H788V38.4H787V37.9H786V38.1H785V38.2H784V38.1H783V37.6H782V38.5H781V38.4H780V38.4H779V38.6H778V38.5H777V38.4H776V35H775V34.5H774V34.7H773V34.7H772V34.9H771V34.7H770V34.6H769V35.5H768V36.3H767V37H766V37.6H765V38.2H764V38.7H763V38.4H762V38.8H761V38.8H760V38.8H759V38.2H758V38.7H757V38.4H756V38.8H755V38.4H754V38.3H753V39.2H752V38.6H751V38.8H750V39H749V38.2H748V38.3H747V38.3H746V38.6H745V38.6H744V38.1H743V38.3H742V38.5H741V38.8H740V38.4H739V38.4H738V38.1H737V39.1H736V37.9H735V38.7H734V38.8H733V38.8H732V38.8H731V38.8H730V38.5H729V38.4H728V38.3H727V37.9H726V38H725V38.7H724V37.9H723V38H722V38.2H721V38.7H720V38.4H719V38.5H718V38.4H717V38.5H716V38.6H715V38.7H714V38.5H713V38.7H712V38.2H711V38.8H710V38.7H709V39.1H708V38.7H707V38.1H706V38.2H705V38.6H704V38.3H703V38.8H702V38.4H701V39H700V38.7H699V38.1H698V38.9H697V38.1H696V38.4H695V38.4H694V38.1H693V38.6H692V38.7H691V38.9H690V38.8H689V38.6H688V39.1H687V38.2H686V38H685V38.8H684V38.8H683V38.2H682V38H681V38.8H680V38.4H679V38.5H678V38.7H677V38.8H676V38.3H675V38.3H674V38.3H673V38.4H672V38.5H671V38H670V38.6H669V38.5H668V38.6H667V38.5H666V38.5H665V38.9H664V38.8H663V38.7H662V38.5H661V37.9H660V38.5H659V38.4H658V38.3H657V38.5H656V38.6H655V38.5H654V38.3H653V38.6H652V38.3H651V38.8H650V38H649V38.3H648V38.3H647V38.5H646V38.1H645V38.5H644V38.5H643V38.4H642V38.7H641V38.4H640V38.2H639V38.5H638V38.1H637V38.6H636V38.9H635V38.7H634V38.7H633V38.9H632V38.6H631V38.8H630V38.5H629V38H628V39H627V38.7H626V38.4H625V38.5H624V38.3H623V38.7H622V38.2H621V38.5H620V38.1H619V38.4H618V38.6H617V38.6H616V38.5H615V38.1H614V38.4H613V38.5H612V38.6H611V38.2H610V38.8H609V38H608V38.6H607V38.1H606V38.1H605V38.5H604V38H603V38.4H602V38.5H601V38.2H600V38.7H599V38.6H598V38.7H597V38.6H596V38.4H595V38.1H594V38.3H593V39H592V38.6H591V39.1H590V38.4H589V38.6H588V38.6H587V38.6H586V39H585V38.7H584V38H583V38.2H582V38.7H581V38.3H580V38.2H579V34.8H578V34.9H577V34.5H576V34.6H575V34.6H574V34.7H573V34.6H572V35.1H571V35.4H570V36H569V37H568V37.9H567V38.5H566V39.1H565V38.1H564V38.7H563V38.5H562V38.9H561V38.2H560V38.2H559V38.6H558V38.5H557V38.5H556V38.4H555V38.1H554V38.7H553V39.1H552V38.9H551V38.6H550V39.1H549V39H548V38.3H547V38.3H546V38.5H545V38.7H544V38.5H543V39.1H542V38.5H541V37.8H540V38.3H539V38.5H538V38.4H537V38.4H536V38.6H535V38.1H534V38.9H533V39H532V38.1H531V38.2H530V38.4H529V38.4H528V38.6H527V38.1H526V38H525V38.5H524V38.3H523V38.3H522V38.8H521V38.2H520V38.4H519V38.5H518V38.3H517V37.7H516V39H515V38.6H514V38.4H513V38.8H512V38.6H511V38.9H510V38.6H509V38.9H508V38.4H507V38.9H506V38H505V37.8H504V38.3H503V38.2H502V38.5H501V38.2H500V38.4H499V38.6H498V38.8H497V38.7H496V39.1H495V38H494V38.8H493V38.9H492V38.1H491V38.5H490V38.6H489V38.8H488V38.2H487V38.4H486V38.2H485V38.3H484V38H483V38.4H482V38.6H481V38.5H480V38.4H479V38.8H478V38.2H477V38.5H476V38.7H475V38.1H474V38.5H473V38.2H472V38H471V38H470V38.7H469V38.1H468V38.4H467V38.8H466V38H465V38.7H464V38.3H463V38.7H462V38.5H461V38.8H460V38.2H459V38.8H458V38.9H457V38H456V38.5H455V38.7H454V38.4H453V38.3H452V38.1H451V39H450V38.3H449V38.9H448V37.8H447V38.4H446V37.8H445V38.5H444V38.6H443V38.5H442V37.8H441V38H440V38.4H439V38.7H438V38.8H437V38.5H436V37.8H435V38.8H434V38.4H433V38.8H432V38.5H431V38.4H430V38H429V38.9H428V38.3H427V38.1H426V38.2H425V39H424V38.2H423V38.2H422V38.4H421V37.9H420V39H419V38.5H418V38.6H417V38.3H416V38.8H415V38.3H414V38.5H413V38.8H412V39H411V39.1H410V38.5H409V38.8H408V38.9H407V38.3H406V38.2H405V38.3H404V38.5H403V38.5H402V38.8H401V37.9H400V38.9H399V38.3H398V38.3H397V38.5H396V38.2H395V38.4H394V38.2H393V38.4H392V38.6H391V38.4H390V38.6H389V38.9H388V38.9H387V38.2H386V38.4H385V38.7H384V39H383V38.4H382V38.4H381V38.6H380V38.9H379V38.4H378V39.1H377V39.2H376V38.8H375V38.2H374V38.2H373V38.8H372V38.5H371V37.7H370V38.4H369V38.3H368V38.3H367V38.5H366V38.2H365V38.5H364V38.2H363V37.9H362V37.9H361V38.7H360V38.1H359V39H358V38.6H357V38.5H356V38.3H355V38.5H354V38.9H353V38.4H352V38.9H351V39H350V38.4H349V38.5H348V38.9H347V38.4H346V39.1H345V38.1H344V38.6H343V38.9H342V38.4H341V37.8H340V37.8H339V38.4H338V38.5H337V38.8H336V39.1H335V38H334V39.1H333V38.4H332V38.9H331V38.7H330V38.1H329V38H328V39H327V38.8H326V38.1H325V38.8H324V38.6H323V38.9H322V34.9H321V34.8H320V35H319V34.7H318V34.7H317V35H316V35.8H315V36.5H314V36.9H313V37.6H312V38.9H311V39.7H310V38.9H309V39.3H308V39H307V38.7H306V39.3H305V38.6H304V39.2H303V39.3H302V39H301V38.9H300V38.7H299V38.9H298V38.5H297V38.9H296V38.9H295V39.2H294V38.3H293V38.4H292V39.1H291V39H290V38.6H289V38.6H288V39.2H287V38.9H286V39.2H285V38.7H284V38.7H283V38.6H282V38.9H281V39.1H280V39.4H279V38.4H278V38.4H277V38.2H276V38.7H275V39.2H274V38.6H273V38.9H272V38.7H271V38.8H270V38.9H269V38.8H268V38.7H267V39.4H266V38.8H265V39.1H264V38.6H263V38.4H262V38.6H261V39.2H260V39.1H259V38.8H258V38.9H257V39.3H256V39.1H255V38.5H254V39.2H253V39.3H252V38.3H251V39.4H250V38.9H249V38.5H248V38.7H247V38.3H246V39H245V39.2H244V38.4H243V39.2H242V38.9H241V39H240V38.5H239V39.6H238V39H237V38.7H236V39.1H235V39.2H234V39H233V38.4H232V38.8H231V38.5H230V39H229V38.7H228V38.6H227V38.6H226V38.7H225V38.4H224V38.8H223V38.8H222V38.5H221V38.7H220V39H219V38.9H218V38.9H217V39H216V38.4H215V38.6H214V38.8H213V38.4H212V38.8H211V38.5H210V39.3H209V38.4H208V38.9H207V39H206V38.3H205V38.6H204V38.9H203V39.1H202V38.4H201V39.4H200V38.5H199V38.8H198V38.9H197V38.6H196V38.7H195V39.5H194V39H193V38.3H192V38.9H191V38.8H190V38.9H189V38.8H188V38.9H187V38.6H186V39.6H185V38.5H184V38.8H183V39.2H182V38.8H181V39H180V38.3H179V38.3H178V38.5H177V39.2H176V38.8H175V39.1H174V38.8H173V38.9H172V38.9H171V38.9H170V39.1H169V38.5H168V39.3H167V38.6H166V38.9H165V38.9H164V39H163V38.6H162V38.5H161V38.6H160V39.2H159V39H158V38.8H157V39.1H156V39.3H155V39.5H154V38.6H153V38.4H152V38.4H151V38.8H150V39.2H149V38.7H148V38.6H147V39.4H146V38.8H145V39H144V38.8H143V38.6H142V39.4H141V38.6H140V38.4H139V38.9H138V38.4H137V39H136V38.5H135V39.3H134V39.1H133V39H132V39.2H131V39H130V38.9H129V39.2H128V39H127V39.4H126V39.1H125V39.2H124V39.1H123V39.1H122V39.2H121V39.1H120V38.2H119V38.5H118V38.6H117V38.8H116V38.6H115V38.6H114V38.7H113V39H112V38.8H111V38.9H110V39.4H109V39H108V38.6H107V38.3H106V39H105V38.9H104V38.4H103V38.9H102V38.8H101V38.8H100V39.3H99V38.6H98V38.2H97V39.5H96V38.6H95V39.1H94V39.1H93V38.8H92V38.9H91V39H90V38.7H89V39.2H88V39.1H87V38.9H86V38.8H85V38.5H84V38.7H83V39.1H82V38.6H81V39.3H80V39H79V38.8H78V38.3H77V39.4H76V38.6H75V38.8H74V39H73V38.8H72V39.3H71V38.6H70V39.5H69V39.3H68V38.9H67V39.2H66V39.1H65V38.7H64V38.8H63V39.2H62V38.8H61V39H60V38.9H59V38.8H58V38.4H57V39.2H56V39.2H55V39.1H54V39.1H53V38.4H52V38.6H51V39.5H50V38.4H49V39.3H48V38.8H47V38.7H46V39.3H45V38.7H44V38.5H43V38.9H42V38.6H41V39H40V38.5H39V38.5H38V38.9H37V38.7H36V39H35V38.5H34V38.8H33V38.3H32V38.7H31V38.7H30V39H29V38.4H28V38.9H27V38.9H26V38.9H25V39.2H24V39.2H23V39.3H22V38.2H21Z" fill="#6cb6fa"/><path d="M20.5 11V42" stroke="#e8e000" stroke-dasharray="1 1" stroke-width="1"/><rect x="20" y="43" width="879" height="11" fill="#1b1b1b"/><path d="M20 43.5H899M20 53.5H899" stroke="#606060" stroke-dasharray="3 3" stroke-width="1"/><rect x="899" y="54" width="83" height="399" fill="#1c1c1c"/><rect x="20" y="453" width="879" height="19" fill="#1c1c1c"/></g><g transform="translate(0,54)"><clipPath id="cfa"><path d="M21 199V152.7H22V155.1H23V156.4H24V160.1H25V158.7H26V158.4H27V156.9H28V156.9H29V156H30V159.1H31V159H32V162.4H33V159.7H34V160.3H35V160.4H36V162.7H37V162.3H38V151.8H39V157.2H40V158.3H41V153.2H42V157.5H43V153.5H44V153.6H45V159.9H46V157.3H47V158.6H48V149.9H49V141.3H50V151H51V153.3H52V153.1H53V161.1H54V155.4H55V152.8H56V147.7H57V159.1H58V152.3H59V152.1H60V146.9H61V157.9H62V155.7H63V155.7H64V155H65V158.3H66V147.3H67V151.5H68V151.4H69V159.2H70V160.8H71V153.7H72V155.2H73V158H74V153.5H75V152.1H76V158.4H77V159.2H78V154.6H79V157.3H80V161.1H81V159.8H82V160.9H83V151.1H84V152H85V154.2H86V156.1H87V155.6H88V160.3H89V160.6H90V151.1H91V161.7H92V160.1H93V155.1H94V154H95V151.7H96V153.6H97V162.9H98V161.4H99V155.9H100V158.2H101V157.7H102V150.9H103V149.3H104V152.3H105V152H106V157H107V158.5H108V156.1H109V157.7H110V156.9H111V152.8H112V154.9H113V157.5H114V157.2H115V162.1H116V162H117V159.7H118V153.7H119V157.6H120V154.5H121V159.8H122V145.4H123V148.2H124V157.9H125V160.8H126V163.5H127V150.1H128V148.7H129V150.7H130V151.2H131V157.8H132V153.8H133V163.3H134V163.7H135V159.3H136V153.1H137V161.5H138V162.4H139V165.6H140V161.4H141V158.3H142V158H143V151.5H144V147.7H145V150H146V153.7H147V152.2H148V156.4H149V143.2H150V153.5H151V161H152V146.6H153V152.6H154V152.8H155V163.6H156V160.1H157V162.4H158V155.8H159V162.2H160V159.4H161V160.7H162V160.6H163V160.4H164V161.8H165V160.8H166V162.7H167V154.1H168V150.2H169V158.8H170V155.1H171V151.4H172V164.5H173V144.7H174V146.7H175V160.8H176V159.9H177V157.4H178V159.9H179V158.2H180V159.3H181V158.2H182V160.9H183V158.2H184V156.7H185V149.9H186V161.5H187V158.6H188V162.5H189V155H190V155.2H191V159.8H192V161.7H193V152H194V156.5H195V157H196V159.4H197V155.4H198V155.1H199V162.9H200V164.2H201V164.2H202V162.9H203V160.5H204V161.3H205V162.8H206V161.9H207V158.7H208V152.3H209V149.6H210V165.6H211V162.7H212V149H213V148.8H214V156.1H215V152.3H216V152.5H217V150.4H218V149.8H219V154.1H220V159.7H221V157.7H222V159.1H223V155.8H224V152.4H225V145.8H226V147H227V155.1H228V159.6H229V160.5H230V161.5H231V162H232V157.3H233V157.8H234V156.4H235V159.1H236V158.3H237V156H238V157.3H239V163.9H240V153H241V150.6H242V150.8H243V157.2H244V147.7H245V161.4H246V154.5H247V151.8H248V151.7H249V150.4H250V154.9H251V154.8H252V153.4H253V158.5H254V155.2H255V160.4H256V163.1H257V147.8H258V151.7H259V163H260V161.2H261V162.1H262V161.9H263V163.4H264V164.3H265V160.6H266V160.3H267V161.6H268V159.9H269V149H270V149.2H271V154H272V152.5H273V158.2H274V156.5H275V154.9H276V155.8H277V161.5H278V161.1H279V145.3H280V158.4H281V153.4H282V158H283V152.5H284V144.4H285V149.3H286V151.1H287V151.5H288V146H289V147.4H290V158.2H291V158.7H292V147.3H293V122H294V122H295V153.5H296V153.2H297V153H298V155.3H299V150.9H300V150.8H301V154.2H302V152.6H303V148.9H304V155.2H305V149.8H306V150.1H307V146.7H308V147.1H309V140.4H310V145.9H311V147.2H312V151.8H313V147.8H314V144.2H315V147H316V146.5H317V149.1H318V135.9H319V148.2H320V141.1H321V143.9H322V149.3H323V148.7H324V152.4H325V150.9H326V143.5H327V140.8H328V144.4H329V151.5H330V154.7H331V150.2H332V152.5H333V152.5H334V148.5H335V147.6H336V138.6H337V151.7H338V152.4H339V148.8H340V156.5H341V149.3H342V148.8H343V150H344V146.9H345V152.6H346V156.3H347V156.5H348V146.7H349V146.4H350V143.2H351V144.4H352V143.6H353V147.9H354V147.6H355V150.8H356V150H357V148.8H358V148.6H359V149.1H360V141.6H361V147H362V146.8H363V139.6H364V138.5H365V147.7H366V146.7H367V149H368V149.8H369V150.5H370V153.4H371V148.9H372V154.6H373V153.4H374V152.2H375V149.5H376V137.7H377V148.8H378V147.5H379V144.2H380V142.5H381V150.7H382V149.7H383V139H384V151.6H385V151.1H386V140.9H387V151.1H388V140.6H389V149.7H390V149.9H391V143H392V153.7H393V152.7H394V150.5H395V141.4H396V152H397V152H398V143.8H399V145.6H400V144.4H401V149.8H402V151.6H403V147.6H404V149.3H405V149H406V148.2H407V148.5H408V148.2H409V144.9H410V144.9H411V145H412V143H413V151H414V150.6H415V152.8H416V150H417V147.8H418V140.6H419V141.8H420V149.5H421V154H422V145.6H423V152.7H424V150.8H425V154.7H426V147.5H427V156.8H428V141.9H429V142.8H430V143.7H431V150.3H432V153.9H433V147H434V152.8H435V151.3H436V150.9H437V152.4H438V152.8H439V156H440V155.5H441V153.6H442V152.6H443V154.7H444V155.7H445V149.1H446V147.8H447V150.8H448V153.2H449V152.8H450V155.4H451V153.9H452V155H453V155.4H454V149.8H455V138H456V148.2H457V154.9H458V152.6H459V152.4H460V155.3H461V152.9H462V154.5H463V157.6H464V155.9H465V147.7H466V148.3H467V147.3H468V149.3H469V145.2H470V142.9H471V140.4H472V143H473V146.5H474V142.4H475V147H476V149.3H477V141.8H478V148.1H479V148.3H480V139.7H481V148.3H482V147.5H483V143.8H484V137.4H485V149.6H486V144.3H487V150.8H488V151.8H489V147.7H490V146.5H491V147.4H492V147.4H493V148.8H494V148.3H495V148.1H496V149.7H497V140.6H498V151.8H499V142.8H500V143.3H501V141.5H502V141H503V142.2H504V150.2H505V150.9H506V149.4H507V149.4H508V144H509V148.4H510V145.8H511V140.9H512V141H513V147.4H514V147.2H515V140.2H516V151.2H517V148.1H518V149.2H519V149.3H520V149.4H521V149.4H522V147.7H523V154.4H524V149.8H525V151.4H526V150.3H527V155.6H528V122H529V122H530V122H531V145H532V144.5H533V147.8H534V148.6H535V140.1H536V149.9H537V147.9H538V148.6H539V147.9H540V148.9H541V149.7H542V154.9H543V154H544V152.9H545V148H546V148.8H547V146.3H548V144.8H549V142.9H550V138.8H551V147.2H552V149.2H553V147.9H554V145.2H555V139.6H556V146.5H557V147.5H558V144.3H559V147.2H560V150.1H561V143.5H562V137.8H563V139.5H564V141.6H565V142.1H566V149.7H567V136.5H568V148.3H569V147.3H570V148.2H571V132.1H572V131.5H573V132H574V143.1H575V147.7H576V139.3H577V139.1H578V138.1H579V137.4H580V146.9H581V150H582V150.7H583V149.8H584V148.9H585V151.5H586V150.6H587V148.4H588V143.6H589V143H590V143.2H591V152.9H592V150.2H593V152H594V141.7H595V146.7H596V149.2H597V144.6H598V142.1H599V147.8H600V145.4H601V142.2H602V141.2H603V141.5H604V150H605V144.8H606V141.7H607V138.9H608V141.5H609V140.1H610V145.1H611V145.4H612V144.6H613V143.2H614V143.3H615V140H616V142H617V141.8H618V146.3H619V147.8H620V148.3H621V138.6H622V143.9H623V146.1H624V142.5H625V142.8H626V140.9H627V138.8H628V142H629V149.5H630V140.2H631V143.2H632V144.7H633V142.3H634V142.8H635V141.7H636V142.9H637V134.5H638V148.7H639V140H640V141.2H641V139.5H642V140.6H643V145.6H644V147.2H645V141.9H646V144.1H647V144.3H648V143.5H649V139.8H650V145.1H651V145.5H652V145.5H653V147.9H654V147.1H655V149.9H656V149.8H657V144.3H658V144.3H659V145.6H660V149.8H661V134.9H662V133.8H663V140.8H664V138.7H665V150.9H666V151.6H667V144.1H668V139.6H669V152.8H670V151.1H671V152.4H672V151H673V149.7H674V145.7H675V148H676V141.8H677V144H678V140.9H679V143.4H680V145.7H681V139.3H682V149.1H683V139.6H684V134.6H685V144.9H686V146.3H687V146.5H688V147.4H689V149.4H690V146.6H691V147.7H692V145.6H693V148.1H694V148.4H695V145.5H696V147.1H697V140.7H698V144.4H699V144.2H700V147.9H701V146.8H702V147.7H703V146.2H704V131.7H705V142.7H706V143.2H707V122H708V122H709V152.3H710V145.3H711V145.7H712V152H713V151.7H714V153.4H715V153.2H716V138.7H717V140H718V147.7H719V145.3H720V149H721V141.3H722V141.7H723V143.6H724V149.9H725V142.6H726V144.5H727V147.4H728V146.3H729V141.8H730V148.5H731V147.6H732V147.8H733V142.4H734V141.8H735V146.4H736V143.3H737V147H738V135.1H739V132.1H740V146.2H741V141.5H742V146.9H743V137.9H744V140.6H745V147H746V144.6H747V147.4H748V142.2H749V143.1H750V146.9H751V142.4H752V145.5H753V143.3H754V140.7H755V140.9H756V142H757V145.8H758V144.6H759V145.1H760V144.7H761V143.1H762V149.1H763V146.8H764V143.4H765V150.7H766V149.3H767V132.1H768V141.9H769V147.8H770V149H771V148.6H772V150.2H773V145.1H774V150.2H775V150.4H776V150.3H777V145.5H778V144.5H779V144.9H780V132.2H781V147.7H782V146.8H783V146.1H784V147.4H785V141.4H786V145.7H787V146.1H788V144.2H789V146.6H790V145.9H791V138.3H792V140.7H793V138.7H794V139.1H795V147.8H796V151H797V147.6H798V149.6H799V149.3H800V149.4H801V149.2H802V147.8H803V145.4H804V143.5H805V149.5H806V145.6H807V150.6H808V141.8H809V141.5H810V138.5H811V140H812V141.6H813V145.6H814V138.6H815V137.8H816V138.5H817V140.6H818V139.1H819V137.2H820V148.9H821V145.3H822V134.5H823V138.2H824V137.5H825V138.1H826V138.6H827V138.2H828V141H829V142.6H830V142H831V139.1H832V141.7H833V147.1H834V145.8H835V147.1H836V150.8H837V150.7H838V146.1H839V142.7H840V141.7H841V139.8H842V141.3H843V147.6H844V142.9H845V148H846V140.7H847V140.9H848V141.1H849V138.7H850V140.2H851V132.4H852V140H853V145H854V139H855V141.1H856V144H857V140.9H858V147.4H859V134.4H860V144.6H861V128.5H862V134.3H863V130.9H864V146.7H865V135.7H866V149.1H867V142H868V139.5H869V141.3H870V141.3H871V141.4H872V138.7H873V144.1H874V147.8H875V149.3H876V149.1H877V147.7H878V143.8H879V142.4H880V143.8H881V139.4H882V138.1H883V144.2H884V142.4H885V131.7H886V146.9H887V149.6H888V138.6H889V141.2H890V140.4H891V142.8H892V145.2H893V145.6H894V140.8H895V140.1H896V137.8H897V138.9H898V122H899V199Z"/><path d="M283 199V150Q288 125 291 101H292V199Z"/><path d="M514 199V150Q519 125 522 101H522V199Z"/><path d="M694 199V150Q701 125 704 101H705V199Z"/><path d="M887 199V150Q894 125 897 101H897V199Z"/></clipPath><rect x="21" y="0" width="878" height="199" fill="url(#gb)"/><rect x="21" y="0" width="878" height="199" fill="url(#gl)" filter="url(#nL)"/><rect x="21" y="0" width="878" height="199" fill="url(#gbl)" filter="url(#nB)"/><rect x="21" y="95" width="878" height="104" fill="url(#gg)" filter="url(#nG)"/><g clip-path="url(#cfa)"><rect x="21" y="0" width="878" height="199" fill="url(#gf)"/><rect x="21" y="0" width="878" height="199" fill="url(#gd)" filter="url(#nD)"/><rect x="21" y="0" width="878" height="199" fill="url(#gy)" filter="url(#nY)"/><rect x="210" y="120" width="2" height="79" fill="#3a1c08" fill-opacity="0.55"/><rect x="214" y="120" width="1" height="79" fill="#3a1c08" fill-opacity="0.3"/><rect x="474" y="120" width="3" height="79" fill="#3a1c08" fill-opacity="0.25"/><rect x="481" y="120" width="2" height="79" fill="#3a1c08" fill-opacity="0.2"/><rect x="354" y="120" width="2" height="79" fill="#3a1c08" fill-opacity="0.2"/><rect x="626" y="120" width="2" height="79" fill="#3a1c08" fill-opacity="0.2"/><rect x="741" y="120" width="3" height="79" fill="#3a1c08" fill-opacity="0.2"/><rect x="760" y="120" width="2" height="79" fill="#3a1c08" fill-opacity="0.2"/></g><path d="M21 0H899V20H898V37H897V44.4H896V43.5H895V47.6H894V47.3H893V37.8H892V36.1H891V46.6H890V47.5H889V39.4H888V45.5H887V58.2H886V37.2H885V51.9H884V44.5H883V43.8H882V58.2H881V46H880V48.1H879V47.2H878V46.2H877V51.7H876V49.9H875V38.3H874V49H873V47.9H872V46.8H871V48.3H870V46.9H869V48.6H868V63.9H867V62.8H866V52.1H865V52.3H864V52H863V60.9H862V43.8H861V44.3H860V63.1H859V64.8H858V55.5H857V53.4H856V56.3H855V54.8H854V55.5H853V68H852V68.6H851V69.2H850V67.2H849V69.5H848V54.1H847V53.1H846V54.3H845V47.2H844V57.4H843V56H842V57.2H841V55.5H840V55H839V55.1H838V54.4H837V56.2H836V53.3H835V64.5H834V50.3H833V60.5H832V63.5H831V53.6H830V61.6H829V54H828V64.6H827V62.5H826V56H825V60.9H824V64.5H823V61.8H822V59.1H821V60.3H820V49.2H819V50H818V49.5H817V48.1H816V63.6H815V56.9H814V56.4H813V46.7H812V55H811V53.9H810V50.2H809V50.2H808V49.6H807V62.4H806V51.4H805V52H804V52.2H803V43.7H802V43.8H801V60.6H800V59.2H799V59.8H798V58.6H797V56.1H796V54.9H795V49.9H794V61.9H793V43.5H792V56.7H791V56.1H790V56.8H789V57.6H788V55.5H787V62.2H786V61.6H785V51H784V57H783V52.6H782V52.1H781V55.9H780V53.3H779V58.1H778V49.7H777V48.7H776V50.4H775V62.7H774V62.9H773V62.4H772V61.5H771V63H770V62.3H769V59.1H768V58.6H767V56.4H766V56.1H765V58.1H764V58H763V54.8H762V55.2H761V63.4H760V55H759V55.7H758V56.1H757V59.5H756V52H755V49.5H754V47.2H753V62H752V62.9H751V61.9H750V44.9H749V54.1H748V55.7H747V58.9H746V67.6H745V46.3H744V43.8H743V58.7H742V50.9H741V51.7H740V52.3H739V52.5H738V48.1H737V47.5H736V46.7H735V59H734V64.8H733V58.1H732V50.1H731V64.4H730V63.6H729V64H728V63.5H727V45.4H726V46.4H725V56.6H724V51.7H723V51.7H722V43.1H721V53H720V56.5H719V55H718V54.2H717V56.6H716V62.1H715V64.6H714V50.2H713V57.4H712V64.4H711V55.7H710V62.4H709V20H708V20H707V55.4H706V58.1H705V61.1H704V62.9H703V63.3H702V57.5H701V59.6H700V65.6H699V61.1H698V60.2H697V60.4H696V55.5H695V60.4H694V61H693V57.9H692V61H691V59.6H690V51.5H689V59.1H688V59.6H687V67.8H686V67H685V58.9H684V59.4H683V66.6H682V53.9H681V57.5H680V56.1H679V68.2H678V56.4H677V59.7H676V57.9H675V60.9H674V63.5H673V66H672V61.1H671V53.5H670V56.9H669V57.3H668V60.3H667V57.6H666V54.1H665V54.6H664V53.3H663V54.1H662V58.2H661V55H660V55.1H659V59.2H658V67H657V54.2H656V52.9H655V57.3H654V63.1H653V54.5H652V56.7H651V59.7H650V59.7H649V58.5H648V58.8H647V59H646V60.8H645V59.8H644V60.3H643V59.2H642V55.4H641V55.8H640V61.7H639V62.1H638V62.3H637V61.3H636V61.6H635V52.4H634V42.6H633V50.9H632V64.5H631V58.5H630V62.8H629V53.1H628V58.8H627V59H626V54.6H625V54.5H624V52H623V55.9H622V55H621V59.2H620V49.9H619V60.5H618V52.8H617V51.4H616V51.2H615V51H614V50.3H613V49.1H612V49.4H611V47.6H610V61.8H609V62.8H608V61.1H607V62.8H606V48.6H605V53.1H604V51.8H603V52.3H602V55.6H601V56.6H600V71.1H599V60.7H598V63.3H597V62.9H596V57.8H595V57.1H594V67.6H593V65.9H592V65.9H591V64.1H590V65.5H589V55.2H588V59.2H587V67.8H586V65H585V57H584V62.7H583V63.1H582V64.8H581V63.2H580V63.5H579V60.7H578V58.2H577V65.5H576V69.5H575V66.1H574V55.6H573V63.2H572V62.4H571V66.3H570V70H569V70.3H568V59.4H567V57.4H566V58.1H565V65.6H564V61.6H563V61.2H562V60H561V58.5H560V56.6H559V60.5H558V58.5H557V58.2H556V64.3H555V59.7H554V59.5H553V59.5H552V64.6H551V57H550V54.2H549V57.3H548V56.1H547V47.5H546V57.5H545V64.3H544V61.4H543V62.9H542V50.8H541V59.6H540V66.1H539V56.5H538V63H537V52.2H536V57H535V56.9H534V62.2H533V63.2H532V62.7H531V20H530V20H529V20H528V46.1H527V47.2H526V51.5H525V49.6H524V54.6H523V43.9H522V53.2H521V44.2H520V52.2H519V46.4H518V37.3H517V58.4H516V50.2H515V57H514V46.9H513V48.5H512V47.2H511V45.8H510V45.8H509V46H508V48.6H507V47.2H506V50.1H505V54.4H504V53.7H503V56.3H502V56.1H501V56.3H500V55.8H499V44H498V43.5H497V58.5H496V59.5H495V45.2H494V56.4H493V55.6H492V57.4H491V51.3H490V57.2H489V50.5H488V48.4H487V49.6H486V49.4H485V49.5H484V53.6H483V53.6H482V54.5H481V61.3H480V46H479V53.4H478V52.3H477V49.8H476V49H475V51.4H474V52.8H473V56.6H472V53.5H471V50H470V49.8H469V50.6H468V50.6H467V53.2H466V55.4H465V55.7H464V50.2H463V42.7H462V58.4H461V52.5H460V54H459V56.7H458V56.9H457V58.6H456V57.2H455V56.7H454V50.7H453V51.4H452V51.9H451V56.5H450V58.9H449V54H448V55.4H447V57.9H446V59.6H445V63.3H444V61.5H443V49.7H442V49.3H441V59.6H440V47.9H439V65.3H438V58.4H437V53.9H436V55.6H435V52H434V52.7H433V54H432V52H431V61.1H430V54.3H429V63.9H428V45.1H427V39.2H426V39.1H425V38.1H424V39.2H423V54.3H422V47.1H421V48.4H420V47.1H419V44.9H418V53.5H417V54H416V41.1H415V48.7H414V48.9H413V41.4H412V50.1H411V53.8H410V49.3H409V40.4H408V47.4H407V54.2H406V47.3H405V46.6H404V44.7H403V51.8H402V62.4H401V60.3H400V52.1H399V53.3H398V46.4H397V47.4H396V61.1H395V62.1H394V59.9H393V53.6H392V62.1H391V46.1H390V48.8H389V46.6H388V39.2H387V49H386V61.9H385V63.8H384V43H383V63.6H382V64.6H381V64.9H380V51.8H379V63.1H378V56.4H377V54.4H376V56.2H375V55.3H374V54.8H373V49.2H372V48.2H371V38.4H370V58.5H369V57.1H368V42.2H367V45H366V49.1H365V52.4H364V53.1H363V51.2H362V58.9H361V53H360V57.9H359V46H358V45.5H357V45.3H356V60.3H355V58.9H354V58.6H353V51.2H352V51.7H351V50.8H350V53.7H349V49H348V49.8H347V58.3H346V57.6H345V50.7H344V49.7H343V47.9H342V48H341V48.6H340V57.5H339V50.9H338V63.4H337V65.6H336V54.5H335V65.1H334V51.5H333V46.9H332V49.2H331V49.3H330V52.1H329V50.8H328V49.1H327V49.6H326V51.5H325V43.1H324V42.7H323V41.8H322V52H321V46.4H320V38.1H319V43.3H318V51.5H317V49.7H316V44.4H315V57.9H314V54.6H313V53.4H312V55.7H311V48.6H310V41H309V41.2H308V42H307V33.9H306V52.1H305V39.5H304V44.1H303V42.8H302V40.4H301V41.4H300V39.8H299V42.6H298V41H297V46.9H296V46.5H295V20H294V20H293V51.7H292V54.7H291V41.9H290V42.4H289V42.1H288V35.8H287V50.6H286V40.6H285V38.2H284V45.2H283V51H282V35.2H281V30H280V44.9H279V46.2H278V35.8H277V34.9H276V37.8H275V36.7H274V26.5H273V36.1H272V36.3H271V48H270V25.9H269V33.5H268V32.2H267V45.7H266V41.2H265V41.5H264V40.3H263V40.8H262V40.8H261V27.3H260V34.7H259V32.8H258V44H257V43.6H256V46.2H255V34.1H254V33H253V35.2H252V39.8H251V40H250V33.4H249V33.4H248V35.7H247V24.5H246V43.5H245V36.8H244V33.7H243V35H242V36.4H241V33.6H240V32.8H239V34.5H238V36.5H237V39.5H236V40.2H235V39.7H234V37.8H233V27.9H232V40H231V40.2H230V36.9H229V38.5H228V38.8H227V35.5H226V47.5H225V36.7H224V37.3H223V40.2H222V43.9H221V42H220V39.9H219V40.8H218V39.8H217V47.6H216V37.5H215V44H214V50.9H213V43H212V40.2H211V40H210V41.2H209V40.7H208V56.8H207V34.6H206V51.2H205V38.4H204V44.1H203V47.9H202V46.5H201V47.1H200V40.4H199V54.5H198V53.8H197V52.7H196V43.5H195V43.2H194V40.9H193V40H192V41.2H191V46.1H190V42.9H189V34.8H188V32.3H187V48.1H186V38H185V42.2H184V41.5H183V37.5H182V37.9H181V49.4H180V41.4H179V42.2H178V45.6H177V33.4H176V33.4H175V42.2H174V45.5H173V36.7H172V42.3H171V42.6H170V40.5H169V38.9H168V43.9H167V35.6H166V37.3H165V41.2H164V38.2H163V39.5H162V49.3H161V50.9H160V51.2H159V39.2H158V43.8H157V33.9H156V30.6H155V29.3H154V48.4H153V43.1H152V38.3H151V37.1H150V37.3H149V37.4H148V45.7H147V46.9H146V46.4H145V46.8H144V33.2H143V47.1H142V31.5H141V32.4H140V34H139V45.8H138V55.7H137V51.6H136V50.6H135V51.7H134V47.3H133V47.9H132V49.1H131V48.5H130V37.1H129V34.2H128V39.4H127V42.5H126V44.2H125V48.1H124V37.7H123V48.6H122V47.3H121V45.3H120V50.2H119V43.4H118V46.7H117V46H116V41.6H115V29H114V34.8H113V36.5H112V29.3H111V31.9H110V33.6H109V34.5H108V35.3H107V43H106V40.7H105V40.3H104V39.7H103V38H102V37H101V42.8H100V35.5H99V40.7H98V39.5H97V44.6H96V43.2H95V36.2H94V34.5H93V34.7H92V36.4H91V33.9H90V35.7H89V43.5H88V43.3H87V37H86V38.1H85V43.9H84V45.1H83V39.7H82V37.4H81V34.4H80V34.4H79V33.6H78V37.2H77V38.2H76V33.9H75V43.1H74V37.3H73V39.1H72V38.7H71V40.6H70V33.5H69V33.4H68V32.2H67V36H66V36.6H65V36.8H64V36.4H63V34.8H62V34.5H61V28.9H60V30.9H59V48H58V49.4H57V41.8H56V50.7H55V41.2H54V38.8H53V39.3H52V39.9H51V48H50V50.2H49V50H48V33.6H47V34.6H46V36.2H45V40.5H44V46H43V40.5H42V43.7H41V42.2H40V42.9H39V32.9H38V42H37V42.2H36V48.1H35V34.9H34V35.6H33V35.9H32V35.3H31V37.2H30V38.1H29V35.5H28V45H27V47.8H26V34.4H25V33.9H24V39.3H23V33.4H22V38.6H21Z" fill="url(#gt)"/><path d="M21.5 20.2V38.6M30.5 28.5V37.2M37.5 24.5V42M46.5 24.3V34.6M57.5 21.2V49.4M59.5 26.5V30.9M66.5 23.3V36M72.5 27.6V39.1M75.5 25.8V33.9M78.5 25.3V33.6M83.5 23.7V45.1M90.5 21.9V33.9M91.5 22.1V36.4M95.5 22.4V43.2M97.5 25.7V39.5M107.5 20.8V35.3M113.5 25.9V34.8M116.5 20.4V46M117.5 23.2V46.7M125.5 26.4V44.2M126.5 21.8V42.5M135.5 29.7V50.6M136.5 26.4V51.6M139.5 27.9V34M141.5 26.9V31.5M145.5 29.2V46.4M147.5 29.9V45.7M148.5 27.5V37.4M149.5 26.9V37.3M151.5 23.2V38.3M154.5 21.2V29.3M155.5 23.6V30.6M163.5 27.7V38.2M167.5 27.4V43.9M170.5 29.7V42.6M171.5 21.8V42.3M173.5 22.9V45.5M176.5 25.7V33.4M179.5 23.7V41.4M183.5 20.7V41.5M189.5 23.3V42.9M192.5 26.1V40M195.5 20.4V43.5M197.5 20.1V53.8M200.5 22.7V47.1M202.5 24.1V47.9M205.5 26.8V51.2M206.5 21.9V34.6M207.5 21V56.8M211.5 27.7V40.2M219.5 23V39.9M228.5 25.8V38.5M231.5 24V40M232.5 25.7V27.9M234.5 24V39.7M236.5 26.2V39.5M239.5 27.6V32.8M241.5 21.7V36.4M245.5 29.9V43.5M247.5 29.4V35.7M252.5 28.2V35.2M253.5 29.1V33M256.5 22.2V43.6M257.5 27V44M263.5 21.7V40.3M272.5 21.5V36.1M280.5 23.8V30M285.5 24.3V40.6M288.5 24.7V42.1M290.5 28.9V41.9M308.5 26.1V41.2M313.5 27.9V54.6M318.5 22.7V43.3M323.5 24.4V42.7M333.5 26.4V51.5M348.5 27.9V49M359.5 20.4V57.9M360.5 24.6V53M370.5 27.8V38.4M372.5 27.8V49.2M373.5 21.2V54.8M375.5 24.6V56.2M378.5 29V63.1M385.5 20.9V61.9M390.5 25.3V46.1M397.5 24.9V46.4M398.5 22.1V53.3M400.5 27.1V60.3M407.5 22.2V47.4M409.5 29.8V49.3M413.5 22.4V48.9M414.5 27.2V48.7M421.5 22.7V47.1M429.5 29.5V54.3M430.5 21.6V61.1M433.5 27V52.7M434.5 24.8V52M440.5 28.6V59.6M450.5 26.4V56.5M452.5 26.4V51.4M453.5 28.4V50.7M458.5 28.2V56.7M459.5 21.3V54M460.5 27V52.5M461.5 24.2V58.4M462.5 27.8V42.7M463.5 22V50.2M471.5 25.4V53.5M483.5 27.8V53.6M485.5 20.1V49.4M489.5 25.9V57.2M490.5 22.2V51.3M491.5 26.3V57.4M498.5 27V44M499.5 23.7V55.8M500.5 24.3V56.3M501.5 20.6V56.1M504.5 26.4V54.4M505.5 24.9V50.1M506.5 29.1V47.2M508.5 27.9V46M517.5 20.5V37.3M522.5 22.4V43.9M527.5 27.3V46.1M535.5 28.5V57M537.5 23V63M542.5 26.9V62.9M546.5 25.8V47.5M548.5 29.3V57.3M551.5 26.8V64.6M552.5 26.2V59.5M556.5 24.3V58.2M559.5 25.5V56.6M563.5 24.4V61.6M564.5 28.5V65.6M566.5 23.7V57.4M567.5 28.9V59.4M574.5 28.2V66.1M578.5 27.1V60.7M579.5 20.2V63.5M592.5 23.2V65.9M595.5 21.3V57.8M598.5 28.3V60.7M600.5 29.5V56.6M602.5 28.3V52.3M603.5 23.8V51.8M604.5 23.8V53.1M605.5 23.8V48.6M609.5 27.3V61.8M618.5 24.1V60.5M626.5 20.7V59M634.5 20.7V52.4M636.5 21.8V61.3M637.5 27.4V62.3M648.5 25.1V58.5M656.5 24.4V54.2M658.5 30V59.2M669.5 22.1V56.9M670.5 21.8V53.5M675.5 22.5V57.9M679.5 20.7V56.1M683.5 24V59.4M684.5 27.9V58.9M688.5 29.7V59.1M700.5 29.5V59.6M702.5 28.4V63.3M704.5 27.7V61.1M705.5 27V58.1M721.5 26.2V43.1M727.5 28.9V63.5M728.5 20.5V64M729.5 20.8V63.6M730.5 22.3V64.4M733.5 21.9V64.8M739.5 21V52.3M740.5 25.9V51.7M747.5 20V55.7M748.5 23.6V54.1M752.5 23.1V62M762.5 22.6V54.8M769.5 28.6V62.3M771.5 29.6V61.5M778.5 22.3V58.1M782.5 23.1V52.6M783.5 26.3V57M785.5 27.7V61.6M787.5 24.9V55.5M796.5 29.6V56.1M798.5 27.7V59.8M812.5 28V46.7M816.5 26.5V48.1M817.5 22.6V49.5M820.5 25V60.3M826.5 29.2V62.5M829.5 26V61.6M831.5 25.5V63.5M834.5 23.7V64.5M835.5 23.1V53.3M837.5 23.6V54.4M841.5 20.7V57.2M842.5 24.9V56M844.5 26.3V47.2M845.5 29.6V54.3M851.5 23.8V68.6M852.5 29.9V68M853.5 22.9V55.5M858.5 21.6V64.8M861.5 28.6V43.8M863.5 20.3V52M864.5 29.6V52.3M865.5 20.7V52.1M874.5 20.7V38.3M879.5 27.7V48.1M886.5 24.5V58.2M893.5 24V47.3M895.5 28.9V43.5M897.5 23.7V37" stroke="#16305a" stroke-opacity="0.45" stroke-width="1" fill="none"/><path d="M25.5 29.4V36.4M26.5 17.2V49.8M27.5 23.9V47M33.5 20.8V37.6M34.5 20.6V36.9M35.5 24.8V50.1M43.5 27.5V48M49.5 22.6V52.2M50.5 19.4V50M52.5 29.2V41.3M56.5 17.2V43.8M68.5 27.6V35.4M71.5 27.3V40.7M77.5 28V39.2M81.5 20.4V39.4M84.5 27.2V45.9M85.5 24.3V40.1M89.5 24.4V37.7M92.5 19.6V36.7M96.5 17.6V46.6M98.5 28.7V42.7M101.5 21.9V39M108.5 25.9V36.5M109.5 26.8V35.6M110.5 20.7V33.9M121.5 25.2V49.3M124.5 26V50.1M140.5 20.5V34.4M144.5 28.9V48.8M153.5 19V50.4M157.5 18.3V45.8M158.5 23.3V41.2M159.5 25.3V53.2M166.5 28.5V37.6M172.5 24.4V38.7M196.5 23.4V54.7M203.5 26.3V46.1M209.5 27.2V43.2M214.5 24.1V46M218.5 23.1V42.8M221.5 18.6V45.9M223.5 23.7V39.3M224.5 18.5V38.7M229.5 22.7V38.9M233.5 17.6V39.8M238.5 17.9V36.5M250.5 26.3V42M251.5 23V41.8M258.5 29.8V34.8M259.5 21.3V36.7M278.5 29.8V48.2M283.5 28.3V47.2M295.5 22.4V48.5M298.5 21.3V44.6M299.5 17.3V41.8M301.5 23.1V42.4M305.5 20.8V54.1M306.5 23.9V35.9M311.5 23.2V57.7M312.5 25.2V55.4M316.5 27.1V51.7M321.5 21.5V54M326.5 26.7V51.6M337.5 30V65.4M353.5 27.5V60.6M354.5 25.9V60.9M362.5 29V53.2M364.5 28V54.4M367.5 27.2V44.2M368.5 20.9V59.1M376.5 19.3V56.4M386.5 18.4V51M389.5 19.2V50.8M394.5 28.4V64.1M401.5 19.8V64.4M404.5 18.6V48.6M405.5 27V49.3M406.5 21V56.2M411.5 19.5V52.1M412.5 29.4V43.4M420.5 18.9V50.4M422.5 26.9V56.3M423.5 20.5V41.2M449.5 23.4V60.9M465.5 18.5V57.4M467.5 22.5V52.6M469.5 27.8V51.8M476.5 19.9V51.8M479.5 18.8V48M484.5 28.6V51.5M502.5 22.1V58.3M507.5 23.2V50.6M512.5 17.8V50.5M523.5 27.1V56.6M532.5 18.2V65.2M533.5 24.8V64.2M541.5 17.9V52.8M544.5 19.3V66.3M545.5 23.6V59.5M549.5 29.7V56.2M554.5 25.5V61.7M560.5 22V60.5M562.5 27.4V63.2M570.5 20.4V68.3M571.5 25.6V64.4M572.5 17.8V65.2M573.5 18.1V57.6M575.5 27.4V71.5M580.5 19V65.2M593.5 21.2V69.6M606.5 23V64.8M607.5 28.6V63.1M612.5 29V51.1M613.5 23.1V52.3M614.5 22.4V53M616.5 28.4V53.4M617.5 17.7V54.8M619.5 27.6V51.9M620.5 19.2V61.2M632.5 21.4V52.9M633.5 21.9V44.6M635.5 24.7V63.6M639.5 17.7V63.7M643.5 19.2V62.3M644.5 22.2V61.8M646.5 18.5V61M647.5 28.5V60.8M649.5 25.8V61.7M662.5 28.9V56.1M663.5 29V55.3M664.5 27.1V56.6M666.5 23.7V59.6M668.5 28.4V59.3M671.5 18.3V63.1M676.5 17.2V61.7M678.5 22.5V70.2M681.5 21.5V55.9M689.5 26.2V53.5M690.5 21.5V61.6M691.5 17V63M692.5 23.5V59.9M698.5 18.4V63.1M701.5 20.3V59.5M706.5 25.3V57.4M710.5 20.4V57.7M711.5 26.1V66.4M713.5 24.9V52.2M715.5 26.3V64.1M720.5 28.4V55M724.5 23.3V58.6M736.5 22.5V49.5M738.5 26.4V54.5M741.5 28.3V52.9M744.5 17.8V48.3M750.5 25.6V63.9M754.5 23.4V51.5M755.5 24.1V54M760.5 20.1V65.4M763.5 23.8V60M765.5 24.8V58.1M766.5 22.8V58.4M770.5 29.5V65M774.5 29.6V64.7M776.5 21.9V50.7M777.5 23.2V51.7M790.5 17.8V58.1M793.5 29.8V63.9M795.5 24.7V56.9M799.5 22.1V61.2M800.5 18.6V62.6M801.5 21.3V45.8M803.5 17.3V54.2M805.5 27.2V53.4M809.5 24.3V52.2M811.5 17.5V57M815.5 28V65.6M818.5 19.1V52M823.5 18.7V66.5M828.5 22V56M846.5 18.8V55.1M848.5 27V71.5M849.5 28.5V69.2M854.5 18V56.8M857.5 22.3V57.5M859.5 25V65.1M872.5 22.5V49.9M876.5 24.3V53.7M877.5 26.7V48.2M881.5 28V60.2M882.5 27.7V45.8M884.5 27.6V53.9M891.5 27.2V38.1M892.5 24.6V39.8M894.5 18.5V49.6" stroke="#7c4c24" stroke-opacity="0.38" stroke-width="1" fill="none"/><path d="M47.5 27.9V33.6M48.5 34.2V50M62.5 27.7V34.8M63.5 35.4V36.4M65.5 27.5V36.6M105.5 27.1V40.7M123.5 28.2V37.7M131.5 35.9V49.1M137.5 26.9V55.7M175.5 30.5V33.4M184.5 31.3V42.2M185.5 33.9V38M186.5 27.2V48.1M190.5 26.3V46.1M199.5 33.2V40.4M204.5 32.5V38.4M213.5 26.8V50.9M217.5 27.6V39.8M281.5 27.9V35.2M287.5 28.9V35.8M292.5 35V51.7M315.5 35.2V44.4M317.5 31.5V51.5M319.5 27.4V38.1M336.5 35.9V65.6M338.5 30.8V50.9M340.5 30.1V48.6M346.5 32.1V58.3M363.5 27.4V53.1M374.5 36V55.3M399.5 31.7V52.1M417.5 35.6V53.5M445.5 30.2V59.6M456.5 27.7V58.6M473.5 32.4V52.8M486.5 33.2V49.6M496.5 31.6V58.5M509.5 30.7V45.8M514.5 26.4V57M520.5 28.7V44.2M524.5 26.5V49.6M534.5 27.5V56.9M538.5 27.1V56.5M540.5 31.6V59.6M557.5 30.8V58.5M582.5 26.3V63.1M596.5 29.4V62.9M621.5 31.4V55M625.5 31.7V54.6M631.5 26.3V64.5M642.5 26.1V59.2M645.5 35.1V60.8M650.5 28.6V59.7M665.5 30.8V54.1M686.5 34.2V67.8M716.5 28.3V56.6M717.5 33.9V54.2M719.5 32.5V56.5M731.5 35.7V50.1M784.5 29.2V51M804.5 29.8V52M814.5 28V56.9M850.5 35.7V69.2M867.5 35.4V63.9M880.5 31.7V46" stroke="#25497a" stroke-opacity="0.5" stroke-width="1" fill="none"/><rect x="21" y="0" width="878" height="28" fill="url(#gs)" filter="url(#nS)"/><path d="M286 18H295V100H291Q288 75 285 44Z" fill="#0a1626"/><path d="M283 199V150Q288 125 291 101H292V199Z" fill="#5a2804" fill-opacity="0.3"/><rect x="292" y="99" width="3" height="100" fill="#0a1626"/><rect x="290" y="98.5" width="5" height="2" fill="#38689a"/><path d="M517 18H531V100H522Q519 75 516 44Z" fill="#0a1626"/><path d="M514 199V150Q519 125 522 101H522V199Z" fill="#5a2804" fill-opacity="0.3"/><rect x="522" y="99" width="9" height="100" fill="#0a1626"/><rect x="521" y="98.5" width="10" height="2" fill="#38689a"/><path d="M694 18H709V100H704Q701 75 693 44Z" fill="#0a1626"/><path d="M694 199V150Q701 125 704 101H705V199Z" fill="#5a2804" fill-opacity="0.3"/><rect x="705" y="99" width="4" height="100" fill="#0a1626"/><rect x="703" y="98.5" width="6" height="2" fill="#38689a"/><path d="M886 18H899V100H897Q894 75 885 44Z" fill="#0a1626"/><path d="M887 199V150Q894 125 897 101H897V199Z" fill="#5a2804" fill-opacity="0.3"/><rect x="897" y="99" width="2" height="100" fill="#0a1626"/><rect x="896" y="98.5" width="3" height="2" fill="#38689a"/><rect x="21" y="18" width="2" height="181" fill="#0a1626"/></g><g transform="translate(0,254)"><clipPath id="cfb"><path d="M21 199V152.1H22V155.3H23V157.9H24V158.2H25V157.8H26V158.5H27V157.2H28V157.7H29V155.3H30V157.5H31V157.8H32V162.9H33V157.8H34V158.4H35V160.5H36V162H37V162.3H38V153H39V158.6H40V160.1H41V153.8H42V158.1H43V154.2H44V154.3H45V160.2H46V158.5H47V160.4H48V150.7H49V139.9H50V150H51V151.3H52V153.2H53V161.6H54V154.1H55V154.1H56V148.5H57V158.5H58V153H59V151H60V149.2H61V156.8H62V158.4H63V155.9H64V155.6H65V157.9H66V147.8H67V151.9H68V152.8H69V160.3H70V162H71V155.1H72V153.4H73V155.6H74V153.1H75V154.3H76V159.5H77V160.3H78V155.8H79V157.9H80V159.9H81V158.7H82V160.6H83V151.8H84V152.9H85V154.7H86V155.9H87V154.8H88V160H89V162.3H90V151.8H91V160.7H92V162.3H93V154.2H94V153.9H95V153.3H96V154.4H97V161.5H98V162.8H99V153.3H100V156.7H101V156.9H102V148.9H103V149.7H104V153H105V151.6H106V157.3H107V157.1H108V157H109V156.5H110V155H111V152.4H112V155.4H113V155.5H114V157.1H115V160.7H116V162.4H117V161.8H118V154.1H119V157.8H120V155.4H121V159.5H122V145.5H123V148.4H124V159H125V161H126V165.3H127V150H128V147.8H129V148.4H130V150H131V158.1H132V154.5H133V161.2H134V165.6H135V158.2H136V150.7H137V163.5H138V164.5H139V164.2H140V158.9H141V157.8H142V156.9H143V151.2H144V149.2H145V152.6H146V153H147V153.3H148V155.8H149V143.4H150V154.1H151V159.2H152V146.8H153V152H154V152.6H155V161.9H156V160.7H157V160.5H158V157.2H159V161.8H160V161.6H161V159.9H162V158.9H163V162.1H164V162.3H165V161.2H166V161.4H167V152.5H168V151.4H169V158.6H170V155.9H171V151.5H172V162.7H173V146.7H174V146.3H175V160.8H176V159.4H177V158.6H178V159.7H179V158.8H180V161H181V160.4H182V159H183V158.5H184V158.2H185V147.8H186V161H187V158H188V160.7H189V154.7H190V155.5H191V159.9H192V161.8H193V152.7H194V156.4H195V158.1H196V158.3H197V153.2H198V156.3H199V163.7H200V163.2H201V163.2H202V162.9H203V159.7H204V160.9H205V160.6H206V160.6H207V159.5H208V154.1H209V151H210V165.2H211V162.9H212V149.9H213V150.1H214V154.7H215V153.2H216V154.9H217V151.1H218V150.3H219V154H220V159.9H221V159.5H222V158.6H223V155.1H224V152.9H225V146.7H226V147.8H227V157.2H228V161.1H229V160.3H230V161.7H231V160.3H232V157.1H233V157.8H234V159H235V158.3H236V156.8H237V157.1H238V157.3H239V164.9H240V150.5H241V150H242V152H243V157.1H244V147.3H245V159.8H246V154.3H247V153.2H248V152.8H249V151.3H250V154.5H251V154.8H252V153.7H253V159.2H254V155.5H255V160H256V160.8H257V148.9H258V152.8H259V160.8H260V160.8H261V160.7H262V160.9H263V162.7H264V163.8H265V162.4H266V161.5H267V160.9H268V161.6H269V149H270V147.8H271V156.5H272V154.4H273V158.9H274V154.6H275V152.6H276V156H277V161.2H278V160.2H279V144.6H280V160.5H281V153.3H282V156.3H283V150.8H284V144.3H285V149.8H286V152.5H287V150.9H288V145.5H289V146.8H290V157.1H291V157.6H292V147H293V122H294V122H295V153.8H296V153.3H297V152.2H298V153.4H299V150.7H300V150.9H301V151.3H302V152.1H303V146.8H304V154.3H305V150.6H306V150.1H307V148.7H308V148.8H309V140.2H310V147.4H311V147.8H312V152.5H313V146.7H314V146.5H315V144.9H316V147H317V147.9H318V134.6H319V147.5H320V140.7H321V142.6H322V149.6H323V147H324V152.6H325V151.2H326V141.5H327V140.5H328V145.1H329V150.3H330V155.4H331V150.6H332V151.8H333V153.5H334V149.2H335V149.2H336V137.7H337V150.4H338V150.6H339V150.8H340V157.1H341V151.1H342V149.5H343V150.3H344V149.3H345V153.4H346V158.3H347V158.1H348V146.6H349V144.5H350V144.1H351V144.1H352V144.9H353V150.1H354V146.6H355V151.6H356V149.6H357V146.7H358V150.3H359V147.9H360V141.7H361V146.2H362V148H363V138.4H364V138.2H365V146.7H366V146.4H367V147.8H368V149.9H369V150.3H370V152.1H371V148H372V152.9H373V154H374V151.6H375V151.1H376V136.4H377V149H378V147H379V145.2H380V142.3H381V150.1H382V150.5H383V139.9H384V151H385V152.3H386V139.6H387V151.5H388V141.7H389V149.8H390V150.1H391V140.7H392V151.6H393V152.1H394V150.9H395V139.4H396V150.2H397V153.5H398V144H399V145.2H400V146.6H401V149.8H402V151.5H403V145.6H404V149.4H405V146.9H406V146.3H407V148H408V148.5H409V145.2H410V144.8H411V143.4H412V143.9H413V153.5H414V151.8H415V154.2H416V149H417V147.6H418V140.5H419V142H420V149.7H421V153.7H422V145H423V154.8H424V149.7H425V153.5H426V149.3H427V155.3H428V142H429V142.2H430V144.8H431V151.2H432V154H433V145.8H434V153H435V153.3H436V150H437V153.7H438V151.6H439V157.7H440V157.9H441V153.7H442V154.4H443V154.6H444V155.3H445V148.3H446V149.1H447V150.1H448V153.6H449V152.4H450V153.5H451V153.5H452V154.3H453V155H454V151.7H455V136.6H456V149.6H457V152.7H458V155.2H459V154.3H460V154H461V152.9H462V154.2H463V155.6H464V157.7H465V148H466V149.3H467V146.4H468V149H469V145.3H470V143.4H471V141.3H472V143H473V147.2H474V142.2H475V145.9H476V150H477V143.2H478V147.4H479V148.8H480V140H481V146.1H482V147.6H483V143.6H484V135H485V150.1H486V144.2H487V149.6H488V151.3H489V149.3H490V148.7H491V145.8H492V148.2H493V149.3H494V147.1H495V148.2H496V147.2H497V140.1H498V150.9H499V145H500V143.8H501V141.2H502V142.5H503V141.3H504V150.3H505V150.8H506V149.8H507V148.4H508V143.2H509V147.3H510V144.7H511V139.2H512V141.1H513V147.2H514V147.3H515V142.3H516V148.8H517V149.3H518V150.4H519V149H520V149.4H521V149.9H522V147H523V153.3H524V151.8H525V152.1H526V151.7H527V155.7H528V122H529V122H530V122H531V145H532V142.6H533V147.5H534V146.8H535V139.9H536V148.6H537V149.8H538V150.1H539V147.6H540V148.5H541V150.4H542V155.9H543V154.2H544V152.2H545V148H546V150H547V147.2H548V145.6H549V144.4H550V140.8H551V146.2H552V150.6H553V148.3H554V144.9H555V140.4H556V145.5H557V148.3H558V143H559V148.7H560V151.3H561V141.2H562V138H563V141H564V140.9H565V141.8H566V149.9H567V135.8H568V149H569V147.5H570V148.2H571V133.5H572V131.5H573V133.2H574V142H575V146.7H576V139.8H577V141.5H578V138.7H579V136.8H580V149.3H581V148.2H582V150H583V147.8H584V150H585V151.2H586V148.5H587V147.8H588V143.1H589V144.3H590V143.4H591V152.4H592V150.7H593V152.8H594V139.9H595V146.9H596V149.9H597V144H598V143H599V147.2H600V144.3H601V139.7H602V139.9H603V140.7H604V149.7H605V143.4H606V142.2H607V140.6H608V142.2H609V140.5H610V146.1H611V144.1H612V143.8H613V141.9H614V141.4H615V140.9H616V140.8H617V141.6H618V146.1H619V148H620V145.9H621V140.3H622V145.5H623V143.9H624V140.8H625V143.1H626V142.8H627V139.5H628V142.6H629V147.7H630V141.2H631V142.6H632V144.9H633V143.5H634V143.8H635V141.9H636V141.4H637V133.5H638V148H639V139.3H640V139.6H641V139.1H642V143.3H643V144.2H644V146.5H645V143.6H646V145.5H647V144.1H648V141.6H649V140H650V146H651V143.5H652V143.6H653V148.7H654V149.1H655V149.3H656V149.9H657V142.9H658V144.9H659V144.5H660V149.8H661V134.6H662V133.4H663V143.5H664V138H665V152.2H666V151H667V144.5H668V137.3H669V152.7H670V150.5H671V152.2H672V151.9H673V148.6H674V145.8H675V148H676V141.1H677V145.3H678V140.8H679V145.8H680V146.5H681V140.4H682V148.6H683V142H684V135.6H685V145.7H686V146.3H687V147.6H688V148.3H689V150.1H690V146H691V146.8H692V146.9H693V147.8H694V147.5H695V147.8H696V147.2H697V141H698V145.7H699V144.3H700V148.7H701V146.5H702V145.3H703V145.5H704V132.3H705V140.9H706V144.9H707V122H708V122H709V151.5H710V143.5H711V146.3H712V151.8H713V151.5H714V153.2H715V152.6H716V139.2H717V140.6H718V148H719V145.4H720V147.6H721V140.6H722V142.9H723V144H724V152H725V143.4H726V142.7H727V149.9H728V147.1H729V141.7H730V148.3H731V147.1H732V147.8H733V144.6H734V142.1H735V146.6H736V144.5H737V146.4H738V132.9H739V134.1H740V143.9H741V140.4H742V146.6H743V138.6H744V139.2H745V145.6H746V144.3H747V148.2H748V144.1H749V143.1H750V147H751V142.2H752V146.9H753V142.2H754V139.6H755V142.1H756V142.4H757V146H758V145H759V143.8H760V144.4H761V143.1H762V148.5H763V145.4H764V144.2H765V149.9H766V149.2H767V132H768V141.5H769V149.5H770V151.2H771V149.9H772V152.1H773V144.2H774V150.8H775V152.5H776V152H777V146.4H778V146.9H779V145.2H780V130.8H781V145.3H782V146.9H783V144.2H784V145.4H785V142.1H786V144.7H787V144.9H788V146.3H789V148H790V145.8H791V140.8H792V139.4H793V138.4H794V139.9H795V147.8H796V151.3H797V147.9H798V149.4H799V149.5H800V149.6H801V147.4H802V148.4H803V146.5H804V143.5H805V147.2H806V145.1H807V149.1H808V139.3H809V142.1H810V137.5H811V140.8H812V140.5H813V146.6H814V140.5H815V138.2H816V138.5H817V139.2H818V140.9H819V137.3H820V149.1H821V145.6H822V135.9H823V137.6H824V139.4H825V137.4H826V140.5H827V137.6H828V140.9H829V144.7H830V139.5H831V139.2H832V143.5H833V147.2H834V146.3H835V147.6H836V150.8H837V149.8H838V145.3H839V144.3H840V142.9H841V141.8H842V142H843V147.6H844V140.8H845V148H846V140.2H847V140.5H848V141.1H849V139.4H850V138.3H851V132.3H852V140.8H853V142.8H854V139.8H855V143.7H856V143H857V141.4H858V145.7H859V132.4H860V146.3H861V128.8H862V134.4H863V133H864V145H865V133.5H866V148.9H867V141.3H868V139.2H869V142H870V140.4H871V141.5H872V139.9H873V144.4H874V147.6H875V148.1H876V148.2H877V148.2H878V143.2H879V143.7H880V144.3H881V139.9H882V138.1H883V142.1H884V143.1H885V131.1H886V148.1H887V148.7H888V140.3H889V141.3H890V142.2H891V143H892V146.8H893V145.8H894V139.1H895V138.9H896V139.5H897V138.3H898V122H899V199Z"/><path d="M283 199V150Q288 125 291 101H292V199Z"/><path d="M514 199V150Q519 125 522 101H522V199Z"/><path d="M694 199V150Q701 125 704 101H705V199Z"/><path d="M887 199V150Q894 125 897 101H897V199Z"/></clipPath><rect x="21" y="0" width="878" height="199" fill="url(#gb)"/><rect x="21" y="0" width="878" height="199" fill="url(#gl)" filter="url(#nL)"/><rect x="21" y="0" width="878" height="199" fill="url(#gbl)" filter="url(#nB)"/><rect x="21" y="95" width="878" height="104" fill="url(#gg)" filter="url(#nG)"/><g clip-path="url(#cfb)"><rect x="21" y="0" width="878" height="199" fill="url(#gf)"/><rect x="21" y="0" width="878" height="199" fill="url(#gd)" filter="url(#nD)"/><rect x="21" y="0" width="878" height="199" fill="url(#gy)" filter="url(#nY)"/><rect x="210" y="120" width="2" height="79" fill="#3a1c08" fill-opacity="0.55"/><rect x="214" y="120" width="1" height="79" fill="#3a1c08" fill-opacity="0.3"/><rect x="474" y="120" width="3" height="79" fill="#3a1c08" fill-opacity="0.25"/><rect x="481" y="120" width="2" height="79" fill="#3a1c08" fill-opacity="0.2"/><rect x="354" y="120" width="2" height="79" fill="#3a1c08" fill-opacity="0.2"/><rect x="626" y="120" width="2" height="79" fill="#3a1c08" fill-opacity="0.2"/><rect x="741" y="120" width="3" height="79" fill="#3a1c08" fill-opacity="0.2"/><rect x="760" y="120" width="2" height="79" fill="#3a1c08" fill-opacity="0.2"/></g><path d="M21 0H899V20H898V38.2H897V42.7H896V45.5H895V45.8H894V46.2H893V38.2H892V37.5H891V47.3H890V45.8H889V37.6H888V43.1H887V57.8H886V35.9H885V50H884V43.9H883V45.4H882V59.2H881V44.8H880V47.1H879V48H878V46.4H877V51.5H876V50.8H875V39.7H874V48.6H873V47.7H872V45.9H871V49.1H870V47H869V49.9H868V62.6H867V62H866V51.1H865V51.5H864V53.2H863V59.1H862V42.5H861V43.8H860V62.8H859V62.7H858V55.8H857V53.8H856V56.3H855V54.9H854V55.6H853V68.7H852V68.5H851V69.3H850V69.3H849V67.6H848V55.6H847V55.6H846V55.2H845V47.8H844V58.1H843V56.7H842V58H841V55.5H840V54.1H839V56H838V54.4H837V57.3H836V55.3H835V64.8H834V50.4H833V60.4H832V63.9H831V52.4H830V61.6H829V53.6H828V66.4H827V61.6H826V58H825V59.8H824V64.3H823V61.2H822V60.2H821V61.6H820V50.7H819V50.9H818V51.8H817V48.1H816V64.9H815V58.7H814V57.3H813V47.6H812V55H811V54.7H810V49H809V50.8H808V49.7H807V61.7H806V51.1H805V50.9H804V51.8H803V45H802V43.6H801V61.3H800V59.6H799V59.8H798V57H797V54.1H796V53.6H795V49.1H794V63.2H793V42H792V57.9H791V54.6H790V57.2H789V55.9H788V57.9H787V59.8H786V61.5H785V51.3H784V57.4H783V53.4H782V54.1H781V55.7H780V53.1H779V57.9H778V50.2H777V48.2H776V50.9H775V63.2H774V62.6H773V62.9H772V61.5H771V62H770V63.4H769V57.9H768V57.4H767V55.1H766V57H765V58.6H764V57.6H763V56.7H762V56.3H761V65.4H760V54H759V56.6H758V56.9H757V58.2H756V49.8H755V48.5H754V49.1H753V62.5H752V62H751V61.8H750V44.6H749V53.8H748V55.6H747V60.9H746V67.7H745V45.5H744V45.9H743V59.7H742V51H741V51.5H740V51.6H739V54.6H738V46.2H737V48.6H736V48.4H735V59.6H734V63.6H733V56.4H732V52H731V65.4H730V62.8H729V62.9H728V61.4H727V44.8H726V45.8H725V57.2H724V51H723V51.2H722V42.6H721V54.5H720V56.6H719V55.9H718V54.6H717V56.5H716V63.2H715V63H714V50.8H713V57.7H712V64.2H711V56.6H710V63H709V20H708V20H707V55.6H706V58.5H705V63.3H704V62.1H703V63.7H702V58.2H701V57.3H700V64.9H699V61.2H698V61.1H697V60.6H696V55.5H695V59.7H694V61.9H693V55.2H692V60.5H691V58.9H690V52.9H689V59.8H688V58.7H687V68.1H686V68.9H685V58.7H684V59.6H683V67.4H682V56H681V56.7H680V57.1H679V68.7H678V57.2H677V59.1H676V58.5H675V59.9H674V63.2H673V68.1H672V59.9H671V55.1H670V54.9H669V57.6H668V59.9H667V57.7H666V53.9H665V54.9H664V54.4H663V54.3H662V59.3H661V55.4H660V55.5H659V57.5H658V64.4H657V52.8H656V52.6H655V57.8H654V63.4H653V54.6H652V55.2H651V59.7H650V58.9H649V57.1H648V60.3H647V61.2H646V60.1H645V58.9H644V61.8H643V59.6H642V57.5H641V57.6H640V61.9H639V62.4H638V63H637V60.9H636V62.3H635V53.2H634V44.5H633V51.3H632V64.2H631V57.2H630V64.2H629V54.2H628V59H627V61.4H626V54.9H625V56.6H624V52.3H623V58.4H622V52.6H621V58.2H620V48.9H619V60.2H618V52.3H617V51.5H616V51.6H615V51.1H614V51.3H613V50.4H612V48.1H611V48.6H610V60.6H609V63.4H608V63.3H607V62.1H606V48.6H605V52.9H604V52.2H603V51H602V56H601V56.2H600V69.8H599V60H598V62.1H597V64.1H596V57.1H595V57.1H594V70.3H593V67.4H592V67.1H591V64.7H590V65H589V57.4H588V58.2H587V66H586V62.8H585V56.3H584V62.1H583V62H582V62.6H581V63.5H580V65H579V60.2H578V59.9H577V63.2H576V70.7H575V64.8H574V57.6H573V65.1H572V62.1H571V66H570V71.4H569V70.2H568V59.4H567V57.7H566V59.1H565V64.5H564V60.4H563V61.5H562V62.5H561V58.5H560V54.7H559V60.1H558V57.9H557V60H556V67H555V57.6H554V59.1H553V60.2H552V62.6H551V55.3H550V54.8H549V55.3H548V55H547V45H546V58.1H545V63.1H544V60.3H543V62.7H542V50H541V57.6H540V67.1H539V56.8H538V63.4H537V52.1H536V56.7H535V55.8H534V62.9H533V63H532V60.8H531V20H530V20H529V20H528V47.2H527V46.8H526V51.4H525V51.2H524V55.2H523V43.3H522V53.1H521V44.7H520V52.2H519V47.5H518V38.2H517V58.4H516V52H515V55.2H514V44.8H513V47H512V45.1H511V47.6H510V46.3H509V48.4H508V46.5H507V47.2H506V49.6H505V54.3H504V54.7H503V56.5H502V55.9H501V57.8H500V57.3H499V44.3H498V44.9H497V58.8H496V58.9H495V46.2H494V54.6H493V54.6H492V56.1H491V53.8H490V58.7H489V52.5H488V48.7H487V49.4H486V50.5H485V51.9H484V53.2H483V51.5H482V54.5H481V60.3H480V45.9H479V52.5H478V53H477V48.4H476V49.3H475V52.3H474V52.3H473V56.7H472V54.1H471V49.4H470V48.3H469V51.2H468V48.7H467V53.3H466V53.7H465V54.9H464V48.6H463V42H462V57.9H461V52.7H460V55.7H459V56.6H458V57.7H457V56.6H456V57.9H455V55.3H454V50.6H453V50.4H452V52.8H451V55H450V58.9H449V54.5H448V56.3H447V55.8H446V59.4H445V60.9H444V61.2H443V48.5H442V50.3H441V60.3H440V46.5H439V64.1H438V57.2H437V53.4H436V58.1H435V51.8H434V52.5H433V52.9H432V53.2H431V61.7H430V52.1H429V63.1H428V43.7H427V39.5H426V37.4H425V40H424V41H423V53.8H422V47.8H421V46.6H420V46.5H419V46H418V54.2H417V52.2H416V39.3H415V47.3H414V47.5H413V43.2H412V50.6H411V53.3H410V47.4H409V40.2H408V46.7H407V53.9H406V44.8H405V45.6H404V46.6H403V51.9H402V61.7H401V61.2H400V54.8H399V54.5H398V48H397V47.7H396V60.6H395V61H394V60.8H393V53.7H392V61.7H391V46.1H390V47.2H389V49.1H388V39.5H387V49.2H386V63.5H385V63.5H384V44.9H383V63.2H382V64.3H381V63.4H380V53.8H379V63.3H378V55.2H377V57.1H376V55.1H375V54.1H374V55.4H373V47.3H372V49.2H371V40.7H370V59.9H369V57.6H368V39.8H367V44.8H366V47.4H365V52.1H364V52.6H363V51.4H362V60.4H361V52.5H360V59.1H359V45.6H358V43.5H357V44.5H356V61.2H355V61.1H354V58.1H353V52.9H352V52H351V52.4H350V53.5H349V49.3H348V49.1H347V56.8H346V56.9H345V51.4H344V51.2H343V50.1H342V48.1H341V50.5H340V56.7H339V53.6H338V64.3H337V66.2H336V54.5H335V64.3H334V51.2H333V45.2H332V52H331V51.6H330V51.2H329V51.8H328V49.2H327V47.5H326V51.3H325V44.8H324V43.3H323V40.4H322V54.6H321V47.4H320V39.8H319V42.1H318V50.1H317V48.9H316V43.3H315V55.3H314V52.6H313V53.6H312V56.7H311V50.1H310V43.5H309V42.4H308V42.9H307V34H306V52.8H305V39H304V44.3H303V40.9H302V41.5H301V42H300V41.5H299V39.9H298V41.9H297V48.4H296V44.6H295V20H294V20H293V53.2H292V57.1H291V42.9H290V42.9H289V42.7H288V35.1H287V50.2H286V40.7H285V39.1H284V45.3H283V51.3H282V33.5H281V28.8H280V47.1H279V46.9H278V36.8H277V35.9H276V37.9H275V38.1H274V23.9H273V35.5H272V36.8H271V45.6H270V26.2H269V34.6H268V32.5H267V45.7H266V39.7H265V40.9H264V39.7H263V40.1H262V41.4H261V29.9H260V34.4H259V31.9H258V45.7H257V46H256V43.9H255V34.2H254V33.3H253V35.3H252V39.9H251V38.5H250V33H249V34.8H248V35.9H247V25.1H246V45.5H245V38H244V34.2H243V34.2H242V34.5H241V33.6H240V31.9H239V33.5H238V38.3H237V42.2H236V42.3H235V39.5H234V39H233V29.5H232V41.5H231V38.7H230V38.4H229V39.2H228V41H227V34.2H226V47.6H225V38.1H224V36.3H223V40.5H222V43.8H221V41.7H220V40.1H219V41.1H218V40.3H217V47.6H216V35.8H215V44.4H214V51.7H213V43.5H212V40.3H211V39.3H210V38.9H209V39.6H208V54.7H207V33.7H206V51.5H205V39.7H204V44.5H203V47.1H202V47.3H201V48.1H200V40.2H199V53.1H198V51.5H197V51.9H196V42.8H195V41.3H194V41.4H193V40.5H192V41.6H191V47.1H190V42.7H189V34.4H188V32.7H187V46.6H186V37.3H185V41.6H184V42H183V37.1H182V37.1H181V47.9H180V40.6H179V40.4H178V46.6H177V33.2H176V32.5H175V44H174V45.2H173V36.8H172V44.1H171V43.1H170V40.8H169V39H168V41.9H167V36.2H166V36.5H165V41.2H164V38.9H163V38.9H162V50.1H161V49.3H160V49.5H159V41.4H158V41.9H157V31.4H156V29.2H155V30.2H154V49.6H153V45.2H152V35.5H151V37.1H150V38.4H149V39.8H148V45H147V45H146V45.6H145V45.5H144V31.8H143V49.6H142V31.5H141V32.3H140V34.4H139V46.3H138V56.3H137V52.6H136V50.2H135V51.1H134V49.5H133V49H132V48.6H131V50.8H130V36.4H129V33.9H128V38.4H127V42.9H126V42.4H125V46.3H124V37.6H123V48.9H122V49.4H121V45.8H120V51.2H119V43.3H118V46.5H117V44.2H116V40H115V28.9H114V33H113V36.8H112V29.2H111V32.1H110V35.2H109V36.7H108V35.1H107V44.7H106V39.7H105V41.4H104V37.9H103V37.1H102V36.5H101V42.4H100V35.4H99V38.3H98V40.1H97V45.1H96V43H95V39H94V36.9H93V36.4H92V35.2H91V34.1H90V35.5H89V44.4H88V44H87V37.8H86V37.7H85V45.6H84V45H83V38.7H82V40.1H81V34.2H80V36.9H79V34.9H78V38.7H77V37.9H76V34.2H75V45.9H74V37.8H73V37.9H72V40H71V39.3H70V34.6H69V35.4H68V33H67V36.1H66V36.7H65V37.7H64V35.8H63V35.2H62V35.6H61V30H60V28.6H59V50.2H58V47.4H57V43.6H56V49.8H55V39.1H54V40.8H53V40.5H52V40.8H51V48.3H50V48.8H49V50.2H48V34.8H47V35.7H46V35.4H45V41.7H44V47.1H43V42.7H42V42.7H41V41.1H40V41.2H39V34.2H38V41.4H37V41.2H36V49H35V34.8H34V33.9H33V36H32V34.2H31V37.9H30V37.9H29V35.4H28V46.8H27V45.7H26V35H25V34.4H24V38H23V34.7H22V39H21Z" fill="url(#gt)"/><path d="M21.5 28.4V39M27.5 28.5V46.8M28.5 21.3V35.4M29.5 25V37.9M31.5 22.3V34.2M33.5 25.5V33.9M38.5 25.1V34.2M39.5 25.8V41.2M44.5 28.5V41.7M60.5 21.3V30M61.5 25.3V35.6M63.5 28.5V35.8M71.5 27.3V40M74.5 20.4V45.9M78.5 28.9V34.9M85.5 21.1V37.7M106.5 25.4V44.7M107.5 20.9V35.1M112.5 25.2V36.8M123.5 28.3V37.6M129.5 20.4V36.4M131.5 26.5V48.6M138.5 29.1V46.3M139.5 26.5V34.4M151.5 23.8V35.5M152.5 20.4V45.2M155.5 23.1V29.2M162.5 24.9V38.9M163.5 28.4V38.9M170.5 23.5V43.1M171.5 20.4V44.1M177.5 28.9V46.6M188.5 22.1V34.4M196.5 21.1V51.9M208.5 21.8V39.6M209.5 21.3V38.9M217.5 21.8V40.3M218.5 23.6V41.1M219.5 20.5V40.1M222.5 28V40.5M223.5 26.2V36.3M225.5 20.4V47.6M226.5 25.2V34.2M230.5 25.7V38.7M232.5 23.4V29.5M234.5 25.6V39.5M236.5 23.7V42.2M237.5 27.5V38.3M244.5 22.5V38M245.5 24.4V45.5M249.5 23.9V33M250.5 24.4V38.5M252.5 28.6V35.3M253.5 24.3V33.3M263.5 22V39.7M265.5 25.7V39.7M266.5 28.9V45.7M272.5 28.9V35.5M275.5 25.5V37.9M276.5 21.6V35.9M279.5 28V47.1M286.5 26.9V50.2M289.5 27.5V42.9M295.5 28.2V44.6M299.5 29V41.5M300.5 27V42M306.5 23.4V34M307.5 26.8V42.9M315.5 26.1V43.3M333.5 20.6V51.2M334.5 21.6V64.3M335.5 25.2V54.5M350.5 25.2V52.4M352.5 26.4V52.9M356.5 22.1V44.5M360.5 26.6V52.5M365.5 23.8V47.4M369.5 29.2V59.9M373.5 26.6V55.4M382.5 26V63.2M385.5 26.6V63.5M388.5 28.6V49.1M390.5 22.5V46.1M397.5 25.6V48M400.5 20.8V61.2M409.5 28.4V47.4M412.5 22.5V43.2M418.5 22V46M420.5 29.1V46.6M421.5 29.9V47.8M424.5 24.9V40M426.5 22V39.5M428.5 28.9V63.1M435.5 25.3V58.1M437.5 24.8V57.2M443.5 24V61.2M444.5 24.4V60.9M447.5 27.3V56.3M449.5 21.2V58.9M453.5 29.6V50.6M459.5 27.9V55.7M463.5 23.2V48.6M470.5 22.7V49.4M472.5 22.1V56.7M478.5 26.6V52.5M480.5 20.7V60.3M481.5 22.7V54.5M483.5 21.7V53.2M485.5 21.4V50.5M490.5 26.2V53.8M492.5 23V54.6M493.5 22.3V54.6M498.5 28.6V44.3M501.5 28.5V55.9M507.5 23.1V46.5M510.5 22V47.6M516.5 20.9V58.4M518.5 28.2V47.5M519.5 29.8V52.2M522.5 22.1V43.3M525.5 20.9V51.4M526.5 25.8V46.8M534.5 29.5V55.8M554.5 25V57.6M560.5 25.3V58.5M565.5 23.9V59.1M577.5 20.9V59.9M579.5 26.8V65M583.5 23.4V62.1M586.5 28.4V66M591.5 27.5V67.1M592.5 26.4V67.4M593.5 27.4V70.3M595.5 21.8V57.1M598.5 29.3V60M599.5 25.4V69.8M604.5 24.4V52.9M609.5 24.2V60.6M614.5 26.3V51.1M618.5 24.5V60.2M619.5 29.3V48.9M625.5 28.3V54.9M626.5 20.8V61.4M627.5 24.9V59M633.5 20.3V44.5M640.5 21.2V57.6M648.5 21.3V57.1M651.5 28.4V55.2M653.5 25.3V63.4M673.5 29.7V63.2M674.5 27.9V59.9M675.5 21.7V58.5M676.5 27.8V59.1M687.5 23.4V58.7M689.5 21.9V52.9M690.5 21.5V58.9M691.5 28.5V60.5M692.5 21.9V55.2M704.5 26.6V63.3M714.5 23V63M718.5 25.6V55.9M721.5 27.9V42.6M726.5 29.9V44.8M732.5 20.5V56.4M737.5 21.8V46.2M740.5 29.3V51.5M750.5 24.1V61.8M751.5 21.1V62M756.5 20.9V58.2M757.5 24.1V56.9M759.5 29V54M760.5 28.6V65.4M763.5 28V57.6M769.5 24.8V63.4M775.5 20.2V50.9M779.5 29V53.1M780.5 26.5V55.7M783.5 24V57.4M788.5 29.3V55.9M789.5 26.7V57.2M791.5 21.8V57.9M795.5 26.8V53.6M798.5 27.4V59.8M801.5 24.7V43.6M803.5 23.1V51.8M804.5 27.5V50.9M805.5 27.2V51.1M807.5 28.8V49.7M809.5 27.1V49M810.5 25.1V54.7M811.5 22.2V55M813.5 20.4V57.3M817.5 20.4V51.8M819.5 26.5V50.7M822.5 22.8V61.2M823.5 25.2V64.3M824.5 21.7V59.8M825.5 25.8V58M834.5 28.9V64.8M840.5 21.5V55.5M847.5 24.6V55.6M848.5 26.3V67.6M849.5 29V69.3M856.5 23.5V53.8M858.5 21.7V62.7M859.5 20.2V62.8M861.5 25.6V42.5M870.5 22.3V49.1M879.5 22V47.1M881.5 24.1V59.2M882.5 21.7V45.4M891.5 25.1V37.5" stroke="#16305a" stroke-opacity="0.45" stroke-width="1" fill="none"/><path d="M25.5 24V37M55.5 27.8V51.8M57.5 22.4V49.4M59.5 26.6V30.6M62.5 26.4V37.2M64.5 28.2V39.7M76.5 21.4V39.9M81.5 20.6V42.1M84.5 26.9V47.6M86.5 25.1V39.8M88.5 19.5V46.4M91.5 25.8V37.2M92.5 29.3V38.4M110.5 23.3V34.1M113.5 19.8V35M116.5 26.8V46.2M128.5 17.6V35.9M137.5 25.5V58.3M147.5 18.4V47M148.5 26.1V41.8M149.5 21.7V40.4M154.5 18V32.2M157.5 17.3V43.9M165.5 19.9V38.5M167.5 19.9V43.9M179.5 17.5V42.6M180.5 20.9V49.9M190.5 22.4V49.1M191.5 23.1V43.6M192.5 20.5V42.5M194.5 21.2V43.3M202.5 25.5V49.1M205.5 25.8V53.5M207.5 19.4V56.7M211.5 18.1V42.3M215.5 26.8V37.8M228.5 21.3V41.2M231.5 19.8V43.5M235.5 25.6V44.3M246.5 20.6V27.1M247.5 18.8V37.9M254.5 18V36.2M255.5 18.3V45.9M259.5 22.3V36.4M260.5 22V31.9M271.5 29.7V38.8M301.5 28.9V43.5M303.5 27.7V46.3M305.5 18.2V54.8M308.5 28.2V44.4M311.5 27.4V58.7M314.5 22.2V57.3M318.5 22.2V44.1M322.5 20.5V42.4M324.5 24.5V46.8M328.5 27.1V53.8M329.5 19.1V53.2M331.5 17.6V54M337.5 24.4V66.3M341.5 23.3V50.1M342.5 24.1V52.1M343.5 19.1V53.2M349.5 19.6V55.5M361.5 28.9V62.4M363.5 19.6V54.6M368.5 28.9V59.6M370.5 22.8V42.7M389.5 19V49.2M393.5 19.1V62.8M394.5 17.1V63M395.5 26V62.6M401.5 29.6V63.7M403.5 21.7V48.6M405.5 25.7V46.8M415.5 26.2V41.3M419.5 18.1V48.5M423.5 26.8V43M431.5 17.3V55.2M433.5 22.3V54.5M436.5 23V55.4M438.5 24.1V66.1M442.5 27.2V50.5M445.5 25.5V61.4M448.5 23.2V56.5M450.5 21.3V57M452.5 21.9V52.4M455.5 18.7V59.9M460.5 24.2V54.7M465.5 28.6V55.7M468.5 22.4V53.2M469.5 25.2V50.3M479.5 23.8V47.9M491.5 23.8V58.1M494.5 19.4V48.2M500.5 18.8V59.8M512.5 19.1V49M513.5 21.8V46.8M520.5 26V46.7M524.5 25.7V53.2M529.5 19.6V22M537.5 24.3V65.4M540.5 17.9V59.6M542.5 26.8V64.7M549.5 20.1V56.8M551.5 26.4V64.6M556.5 22.1V62M557.5 23.4V59.9M558.5 18.4V62.1M562.5 19.6V63.5M564.5 20.3V66.5M566.5 23.8V59.7M567.5 23.6V61.4M569.5 19.4V73.4M573.5 26.4V59.6M575.5 23.5V72.7M578.5 23.1V62.2M580.5 17.4V65.5M581.5 20.7V64.6M588.5 18.3V59.4M589.5 24.7V67M590.5 24.4V66.7M597.5 18.9V64.1M600.5 26.2V58.2M605.5 23.9V50.6M606.5 28.2V64.1M624.5 24V58.6M629.5 17.8V66.2M630.5 23.8V59.2M632.5 19.4V53.3M634.5 29.7V55.2M636.5 26.2V62.9M639.5 20V63.9M645.5 26.8V62.1M646.5 26V63.2M647.5 27.8V62.3M655.5 28V54.6M660.5 22V57.4M664.5 20.5V56.9M667.5 18.6V61.9M668.5 23.2V59.6M669.5 18.9V56.9M679.5 19.5V59.1M680.5 28.1V58.7M683.5 17.8V61.6M684.5 17.4V60.7M685.5 25.2V70.9M686.5 28.7V70.1M693.5 19.2V63.9M695.5 29.9V57.5M698.5 29.7V63.2M699.5 17.5V66.9M701.5 18.6V60.2M705.5 18.6V60.5M706.5 29.3V57.6M707.5 21V22M709.5 22.6V65M712.5 21.2V59.7M713.5 24.9V52.8M715.5 23V65.2M716.5 20.8V58.5M727.5 24.3V63.4M731.5 21.2V54M733.5 23V65.6M742.5 27.2V61.7M749.5 26.1V46.6M752.5 26.2V64.5M758.5 22.2V58.6M764.5 27.9V60.6M767.5 29.4V59.4M768.5 26.5V59.9M786.5 27.5V61.8M787.5 17.2V59.9M792.5 27.5V44M812.5 23.6V49.6M814.5 27.5V60.7M828.5 19.9V55.6M829.5 27.8V63.6M832.5 26.5V62.4M835.5 20.7V57.3M836.5 23.6V59.3M837.5 25.7V56.4M838.5 22.6V58M839.5 29.9V56.1M853.5 20.9V57.6M860.5 23.9V45.8M862.5 17.9V61.1M865.5 29.7V53.1M867.5 29.9V64.6M869.5 24.1V49M875.5 25.4V52.8M878.5 21.9V50M884.5 26.5V52M885.5 21.1V37.9M888.5 29.6V39.6M890.5 18.7V49.3M893.5 24.5V48.2M897.5 19.9V40.2M898.5 20.2V22" stroke="#7c4c24" stroke-opacity="0.38" stroke-width="1" fill="none"/><path d="M23.5 33.7V38M34.5 26.1V34.8M35.5 26.8V49M37.5 28.7V41.4M48.5 35.2V50.2M75.5 30.6V34.2M77.5 31.6V38.7M100.5 30.1V42.4M102.5 30.2V37.1M130.5 28.9V50.8M136.5 29.6V52.6M146.5 31.7V45M160.5 36V49.3M175.5 27.3V32.5M199.5 33V40.2M200.5 33V48.1M203.5 28V44.5M212.5 26.1V43.5M229.5 26.4V38.4M238.5 28.6V33.5M248.5 30V34.8M258.5 26.4V31.9M319.5 26.4V39.8M330.5 29V51.6M336.5 30.3V66.2M364.5 28.3V52.1M376.5 33V57.1M387.5 35.4V39.5M392.5 28.2V53.7M396.5 26.8V47.7M410.5 35.9V53.3M432.5 28.3V52.9M464.5 29.8V54.9M467.5 30.6V48.7M471.5 31.9V54.1M474.5 34.9V52.3M482.5 26.5V51.5M495.5 29.7V58.9M523.5 29V55.2M531.5 28.2V60.8M541.5 26.4V50M548.5 33.7V55.3M559.5 30.7V54.7M574.5 28.7V64.8M596.5 34.2V64.1M602.5 26.6V51M608.5 28.2V63.4M613.5 32.9V51.3M643.5 31.9V61.8M671.5 31.4V59.9M717.5 27.5V54.6M723.5 30.9V51M734.5 33.2V59.6M743.5 35.7V45.9M746.5 32.6V60.9M776.5 27.4V48.2M778.5 29.9V57.9M784.5 30.7V51.3M797.5 35.8V57M800.5 32.9V61.3M816.5 33.9V48.1M821.5 33V60.2M826.5 31V61.6M827.5 32.2V66.4M846.5 35.2V55.6M851.5 34.2V68.5M873.5 34.5V48.6M874.5 33.9V39.7M887.5 33.5V43.1" stroke="#25497a" stroke-opacity="0.5" stroke-width="1" fill="none"/><rect x="21" y="0" width="878" height="28" fill="url(#gs)" filter="url(#nS)"/><path d="M286 18H295V100H291Q288 75 285 44Z" fill="#0a1626"/><path d="M283 199V150Q288 125 291 101H292V199Z" fill="#5a2804" fill-opacity="0.3"/><rect x="292" y="99" width="3" height="100" fill="#0a1626"/><rect x="290" y="98.5" width="5" height="2" fill="#38689a"/><path d="M517 18H531V100H522Q519 75 516 44Z" fill="#0a1626"/><path d="M514 199V150Q519 125 522 101H522V199Z" fill="#5a2804" fill-opacity="0.3"/><rect x="522" y="99" width="9" height="100" fill="#0a1626"/><rect x="521" y="98.5" width="10" height="2" fill="#38689a"/><path d="M694 18H709V100H704Q701 75 693 44Z" fill="#0a1626"/><path d="M694 199V150Q701 125 704 101H705V199Z" fill="#5a2804" fill-opacity="0.3"/><rect x="705" y="99" width="4" height="100" fill="#0a1626"/><rect x="703" y="98.5" width="6" height="2" fill="#38689a"/><path d="M886 18H899V100H897Q894 75 885 44Z" fill="#0a1626"/><path d="M887 199V150Q894 125 897 101H897V199Z" fill="#5a2804" fill-opacity="0.3"/><rect x="897" y="99" width="2" height="100" fill="#0a1626"/><rect x="896" y="98.5" width="3" height="2" fill="#38689a"/><rect x="21" y="18" width="2" height="181" fill="#0a1626"/></g><g shape-rendering="crispEdges"><rect x="20" y="253" width="963" height="1" fill="#c8c8c8"/><rect x="8" y="54" width="9" height="198" fill="#1a1a1a"/><rect x="9" y="55" width="7" height="197" fill="#626262"/><rect x="8" y="254" width="9" height="198" fill="#1a1a1a"/><rect x="9" y="255" width="7" height="197" fill="#626262"/></g><rect x="8" y="252" width="9" height="3" fill="#101010"/><path d="M10.5 149V157L15 153Z" fill="#1c1c1c"/><path d="M10.5 349V357L15 353Z" fill="#1c1c1c"/><g shape-rendering="crispEdges"><path d="M20.5 54V453" stroke="#00f000" stroke-dasharray="1 3" stroke-width="1"/><path d="M20.5 56V453" stroke="#e0e000" stroke-dasharray="1 3" stroke-width="1"/><path d="M294.5 54V453" stroke="#00e400" stroke-dasharray="1 1" stroke-width="1"/><path d="M530.5 54V453" stroke="#00e400" stroke-dasharray="1 1" stroke-width="1"/><path d="M708.5 54V453" stroke="#00e400" stroke-dasharray="1 1" stroke-width="1"/><rect x="899" y="54" width="1" height="399" fill="#a8a8a8"/><path d="M940.5 54V453" stroke="#8a8a8a" stroke-dasharray="3 2" stroke-width="1"/><rect x="900" y="63" width="2" height="1" fill="#a8a8a8"/><rect x="900" y="73" width="2" height="1" fill="#a8a8a8"/><rect x="900" y="83" width="2" height="1" fill="#a8a8a8"/><rect x="900" y="93" width="2" height="1" fill="#a8a8a8"/><rect x="900" y="103" width="4" height="1" fill="#a8a8a8"/><rect x="900" y="113" width="2" height="1" fill="#a8a8a8"/><rect x="900" y="123" width="2" height="1" fill="#a8a8a8"/><rect x="900" y="133" width="2" height="1" fill="#a8a8a8"/><rect x="900" y="143" width="2" height="1" fill="#a8a8a8"/><rect x="900" y="153" width="4" height="1" fill="#a8a8a8"/><rect x="900" y="163" width="2" height="1" fill="#a8a8a8"/><rect x="900" y="173" width="2" height="1" fill="#a8a8a8"/><rect x="900" y="183" width="2" height="1" fill="#a8a8a8"/><rect x="900" y="193" width="2" height="1" fill="#a8a8a8"/><rect x="900" y="203" width="4" height="1" fill="#a8a8a8"/><rect x="900" y="213" width="2" height="1" fill="#a8a8a8"/><rect x="900" y="223" width="2" height="1" fill="#a8a8a8"/><rect x="900" y="233" width="2" height="1" fill="#a8a8a8"/><rect x="900" y="243" width="2" height="1" fill="#a8a8a8"/><rect x="942" y="80" width="4" height="1" fill="#a8a8a8"/><rect x="942" y="116" width="4" height="1" fill="#a8a8a8"/><rect x="942" y="142" width="4" height="1" fill="#a8a8a8"/><rect x="942" y="168" width="4" height="1" fill="#a8a8a8"/><rect x="942" y="198" width="4" height="1" fill="#a8a8a8"/><rect x="942" y="217" width="4" height="1" fill="#a8a8a8"/><rect x="942" y="231" width="4" height="1" fill="#a8a8a8"/><rect x="942" y="245" width="4" height="1" fill="#a8a8a8"/><rect x="942" y="60" width="1" height="1" fill="#a8a8a8"/><rect x="942" y="65" width="1" height="1" fill="#a8a8a8"/><rect x="942" y="70" width="1" height="1" fill="#a8a8a8"/><rect x="942" y="95" width="1" height="1" fill="#a8a8a8"/><rect x="942" y="104" width="1" height="1" fill="#a8a8a8"/><rect x="942" y="126" width="1" height="1" fill="#a8a8a8"/><rect x="942" y="133" width="1" height="1" fill="#a8a8a8"/><rect x="942" y="152" width="1" height="1" fill="#a8a8a8"/><rect x="942" y="159" width="1" height="1" fill="#a8a8a8"/><rect x="942" y="178" width="1" height="1" fill="#a8a8a8"/><rect x="942" y="186" width="1" height="1" fill="#a8a8a8"/><rect x="942" y="192" width="1" height="1" fill="#a8a8a8"/><rect x="942" y="204" width="1" height="1" fill="#a8a8a8"/><rect x="942" y="208" width="1" height="1" fill="#a8a8a8"/><rect x="942" y="212" width="1" height="1" fill="#a8a8a8"/><rect x="942" y="221" width="1" height="1" fill="#a8a8a8"/><rect x="942" y="224" width="1" height="1" fill="#a8a8a8"/><rect x="942" y="227" width="1" height="1" fill="#a8a8a8"/><rect x="942" y="235" width="1" height="1" fill="#a8a8a8"/><rect x="942" y="238" width="1" height="1" fill="#a8a8a8"/><rect x="942" y="241" width="1" height="1" fill="#a8a8a8"/><rect x="900" y="263" width="2" height="1" fill="#a8a8a8"/><rect x="900" y="273" width="2" height="1" fill="#a8a8a8"/><rect x="900" y="283" width="2" height="1" fill="#a8a8a8"/><rect x="900" y="293" width="2" height="1" fill="#a8a8a8"/><rect x="900" y="303" width="4" height="1" fill="#a8a8a8"/><rect x="900" y="313" width="2" height="1" fill="#a8a8a8"/><rect x="900" y="323" width="2" height="1" fill="#a8a8a8"/><rect x="900" y="333" width="2" height="1" fill="#a8a8a8"/><rect x="900" y="343" width="2" height="1" fill="#a8a8a8"/><rect x="900" y="353" width="4" height="1" fill="#a8a8a8"/><rect x="900" y="363" width="2" height="1" fill="#a8a8a8"/><rect x="900" y="373" width="2" height="1" fill="#a8a8a8"/><rect x="900" y="383" width="2" height="1" fill="#a8a8a8"/><rect x="900" y="393" width="2" height="1" fill="#a8a8a8"/><rect x="900" y="403" width="4" height="1" fill="#a8a8a8"/><rect x="900" y="413" width="2" height="1" fill="#a8a8a8"/><rect x="900" y="423" width="2" height="1" fill="#a8a8a8"/><rect x="900" y="433" width="2" height="1" fill="#a8a8a8"/><rect x="900" y="443" width="2" height="1" fill="#a8a8a8"/><rect x="942" y="280" width="4" height="1" fill="#a8a8a8"/><rect x="942" y="316" width="4" height="1" fill="#a8a8a8"/><rect x="942" y="342" width="4" height="1" fill="#a8a8a8"/><rect x="942" y="368" width="4" height="1" fill="#a8a8a8"/><rect x="942" y="398" width="4" height="1" fill="#a8a8a8"/><rect x="942" y="417" width="4" height="1" fill="#a8a8a8"/><rect x="942" y="431" width="4" height="1" fill="#a8a8a8"/><rect x="942" y="445" width="4" height="1" fill="#a8a8a8"/><rect x="942" y="260" width="1" height="1" fill="#a8a8a8"/><rect x="942" y="265" width="1" height="1" fill="#a8a8a8"/><rect x="942" y="270" width="1" height="1" fill="#a8a8a8"/><rect x="942" y="295" width="1" height="1" fill="#a8a8a8"/><rect x="942" y="304" width="1" height="1" fill="#a8a8a8"/><rect x="942" y="326" width="1" height="1" fill="#a8a8a8"/><rect x="942" y="333" width="1" height="1" fill="#a8a8a8"/><rect x="942" y="352" width="1" height="1" fill="#a8a8a8"/><rect x="942" y="359" width="1" height="1" fill="#a8a8a8"/><rect x="942" y="378" width="1" height="1" fill="#a8a8a8"/><rect x="942" y="386" width="1" height="1" fill="#a8a8a8"/><rect x="942" y="392" width="1" height="1" fill="#a8a8a8"/><rect x="942" y="404" width="1" height="1" fill="#a8a8a8"/><rect x="942" y="408" width="1" height="1" fill="#a8a8a8"/><rect x="942" y="412" width="1" height="1" fill="#a8a8a8"/><rect x="942" y="421" width="1" height="1" fill="#a8a8a8"/><rect x="942" y="424" width="1" height="1" fill="#a8a8a8"/><rect x="942" y="427" width="1" height="1" fill="#a8a8a8"/><rect x="942" y="435" width="1" height="1" fill="#a8a8a8"/><rect x="942" y="438" width="1" height="1" fill="#a8a8a8"/><rect x="942" y="441" width="1" height="1" fill="#a8a8a8"/><rect x="20" y="453" width="879" height="1" fill="#5c5c5c"/><rect x="20" y="453" width="1" height="5" fill="#a0a0a0"/><rect x="28" y="453" width="1" height="2" fill="#a0a0a0"/><rect x="37" y="453" width="1" height="2" fill="#a0a0a0"/><rect x="46" y="453" width="1" height="2" fill="#a0a0a0"/><rect x="55" y="453" width="1" height="2" fill="#a0a0a0"/><rect x="63" y="453" width="1" height="5" fill="#a0a0a0"/><rect x="72" y="453" width="1" height="2" fill="#a0a0a0"/><rect x="81" y="453" width="1" height="2" fill="#a0a0a0"/><rect x="90" y="453" width="1" height="2" fill="#a0a0a0"/><rect x="99" y="453" width="1" height="2" fill="#a0a0a0"/><rect x="107" y="453" width="1" height="5" fill="#a0a0a0"/><rect x="116" y="453" width="1" height="2" fill="#a0a0a0"/><rect x="125" y="453" width="1" height="2" fill="#a0a0a0"/><rect x="134" y="453" width="1" height="2" fill="#a0a0a0"/><rect x="142" y="453" width="1" height="2" fill="#a0a0a0"/><rect x="151" y="453" width="1" height="5" fill="#a0a0a0"/><rect x="160" y="453" width="1" height="2" fill="#a0a0a0"/><rect x="169" y="453" width="1" height="2" fill="#a0a0a0"/><rect x="177" y="453" width="1" height="2" fill="#a0a0a0"/><rect x="186" y="453" width="1" height="2" fill="#a0a0a0"/><rect x="195" y="453" width="1" height="5" fill="#a0a0a0"/><rect x="204" y="453" width="1" height="2" fill="#a0a0a0"/><rect x="212" y="453" width="1" height="2" fill="#a0a0a0"/><rect x="221" y="453" width="1" height="2" fill="#a0a0a0"/><rect x="230" y="453" width="1" height="2" fill="#a0a0a0"/><rect x="239" y="453" width="1" height="5" fill="#a0a0a0"/><rect x="247" y="453" width="1" height="2" fill="#a0a0a0"/><rect x="256" y="453" width="1" height="2" fill="#a0a0a0"/><rect x="265" y="453" width="1" height="2" fill="#a0a0a0"/><rect x="274" y="453" width="1" height="2" fill="#a0a0a0"/><rect x="282" y="453" width="1" height="5" fill="#a0a0a0"/><rect x="291" y="453" width="1" height="2" fill="#a0a0a0"/><rect x="300" y="453" width="1" height="2" fill="#a0a0a0"/><rect x="309" y="453" width="1" height="2" fill="#a0a0a0"/><rect x="317" y="453" width="1" height="2" fill="#a0a0a0"/><rect x="326" y="453" width="1" height="5" fill="#a0a0a0"/><rect x="335" y="453" width="1" height="2" fill="#a0a0a0"/><rect x="344" y="453" width="1" height="2" fill="#a0a0a0"/><rect x="353" y="453" width="1" height="2" fill="#a0a0a0"/><rect x="361" y="453" width="1" height="2" fill="#a0a0a0"/><rect x="370" y="453" width="1" height="5" fill="#a0a0a0"/><rect x="379" y="453" width="1" height="2" fill="#a0a0a0"/><rect x="388" y="453" width="1" height="2" fill="#a0a0a0"/><rect x="396" y="453" width="1" height="2" fill="#a0a0a0"/><rect x="405" y="453" width="1" height="2" fill="#a0a0a0"/><rect x="414" y="453" width="1" height="5" fill="#a0a0a0"/><rect x="423" y="453" width="1" height="2" fill="#a0a0a0"/><rect x="431" y="453" width="1" height="2" fill="#a0a0a0"/><rect x="440" y="453" width="1" height="2" fill="#a0a0a0"/><rect x="449" y="453" width="1" height="2" fill="#a0a0a0"/><rect x="458" y="453" width="1" height="5" fill="#a0a0a0"/><rect x="466" y="453" width="1" height="2" fill="#a0a0a0"/><rect x="475" y="453" width="1" height="2" fill="#a0a0a0"/><rect x="484" y="453" width="1" height="2" fill="#a0a0a0"/><rect x="493" y="453" width="1" height="2" fill="#a0a0a0"/><rect x="501" y="453" width="1" height="5" fill="#a0a0a0"/><rect x="510" y="453" width="1" height="2" fill="#a0a0a0"/><rect x="519" y="453" width="1" height="2" fill="#a0a0a0"/><rect x="528" y="453" width="1" height="2" fill="#a0a0a0"/><rect x="536" y="453" width="1" height="2" fill="#a0a0a0"/><rect x="545" y="453" width="1" height="5" fill="#a0a0a0"/><rect x="554" y="453" width="1" height="2" fill="#a0a0a0"/><rect x="563" y="453" width="1" height="2" fill="#a0a0a0"/><rect x="571" y="453" width="1" height="2" fill="#a0a0a0"/><rect x="580" y="453" width="1" height="2" fill="#a0a0a0"/><rect x="589" y="453" width="1" height="5" fill="#a0a0a0"/><rect x="598" y="453" width="1" height="2" fill="#a0a0a0"/><rect x="606" y="453" width="1" height="2" fill="#a0a0a0"/><rect x="615" y="453" width="1" height="2" fill="#a0a0a0"/><rect x="624" y="453" width="1" height="2" fill="#a0a0a0"/><rect x="633" y="453" width="1" height="5" fill="#a0a0a0"/><rect x="642" y="453" width="1" height="2" fill="#a0a0a0"/><rect x="650" y="453" width="1" height="2" fill="#a0a0a0"/><rect x="659" y="453" width="1" height="2" fill="#a0a0a0"/><rect x="668" y="453" width="1" height="2" fill="#a0a0a0"/><rect x="677" y="453" width="1" height="5" fill="#a0a0a0"/><rect x="685" y="453" width="1" height="2" fill="#a0a0a0"/><rect x="694" y="453" width="1" height="2" fill="#a0a0a0"/><rect x="703" y="453" width="1" height="2" fill="#a0a0a0"/><rect x="712" y="453" width="1" height="2" fill="#a0a0a0"/><rect x="720" y="453" width="1" height="5" fill="#a0a0a0"/><rect x="729" y="453" width="1" height="2" fill="#a0a0a0"/><rect x="738" y="453" width="1" height="2" fill="#a0a0a0"/><rect x="747" y="453" width="1" height="2" fill="#a0a0a0"/><rect x="755" y="453" width="1" height="2" fill="#a0a0a0"/><rect x="764" y="453" width="1" height="5" fill="#a0a0a0"/><rect x="773" y="453" width="1" height="2" fill="#a0a0a0"/><rect x="782" y="453" width="1" height="2" fill="#a0a0a0"/><rect x="790" y="453" width="1" height="2" fill="#a0a0a0"/><rect x="799" y="453" width="1" height="2" fill="#a0a0a0"/><rect x="808" y="453" width="1" height="5" fill="#a0a0a0"/><rect x="817" y="453" width="1" height="2" fill="#a0a0a0"/><rect x="825" y="453" width="1" height="2" fill="#a0a0a0"/><rect x="834" y="453" width="1" height="2" fill="#a0a0a0"/><rect x="843" y="453" width="1" height="2" fill="#a0a0a0"/><rect x="852" y="453" width="1" height="5" fill="#a0a0a0"/><rect x="860" y="453" width="1" height="2" fill="#a0a0a0"/><rect x="869" y="453" width="1" height="2" fill="#a0a0a0"/><rect x="878" y="453" width="1" height="2" fill="#a0a0a0"/><rect x="887" y="453" width="1" height="2" fill="#a0a0a0"/><rect x="896" y="453" width="1" height="5" fill="#a0a0a0"/><path d="M20 472.5H899" stroke="#7a7a7a" stroke-dasharray="3 3" stroke-width="1"/></g><path d="M20 45H28L20 53Z" fill="#8c8c8c"/><path d="M287.5 46H301.5L294.5 53.5Z" fill="#00f400"/><path d="M523.5 46H537.5L530.5 53.5Z" fill="#00f400"/><path d="M701.5 46H715.5L708.5 53.5Z" fill="#00f400"/><g font-size="10" fill="#f4f4f4" letter-spacing="-0.4"><text x="29" y="52.3">01</text><text x="302.5" y="52.3">02</text><text x="538.5" y="52.3">03</text><text x="716.5" y="52.3">04</text></g><g font-size="11" fill="#b2b2b2" letter-spacing="-0.15"><text x="906.5" y="67">dB</text><text x="906.5" y="107">-6,02</text><text x="906.5" y="157">-oo</text><text x="906.5" y="207">-6,02</text><text x="948.5" y="84">50000</text><text x="948.5" y="120">20000</text><text x="948.5" y="146">10000</text><text x="948.5" y="172">5000</text><text x="948.5" y="202">2000</text><text x="948.5" y="221">1000</text><text x="948.5" y="235">500</text><text x="906.5" y="307">-6,02</text><text x="906.5" y="357">-oo</text><text x="906.5" y="407">-6,02</text><text x="948.5" y="284">50000</text><text x="948.5" y="320">20000</text><text x="948.5" y="346">10000</text><text x="948.5" y="372">5000</text><text x="948.5" y="402">2000</text><text x="948.5" y="421">1000</text><text x="948.5" y="435">500</text><text x="980" y="251" text-anchor="end">Hz</text></g><g font-size="11" fill="#b2b2b2" letter-spacing="-0.1"><text x="23.5" y="467.5">hms</text><text x="63.7" y="467.5" text-anchor="middle">0:50</text><text x="107.5" y="467.5" text-anchor="middle">1:40</text><text x="151.3" y="467.5" text-anchor="middle">2:30</text><text x="195.1" y="467.5" text-anchor="middle">3:20</text><text x="238.9" y="467.5" text-anchor="middle">4:10</text><text x="282.6" y="467.5" text-anchor="middle">5:00</text><text x="326.4" y="467.5" text-anchor="middle">5:50</text><text x="370.2" y="467.5" text-anchor="middle">6:40</text><text x="414" y="467.5" text-anchor="middle">7:30</text><text x="457.8" y="467.5" text-anchor="middle">8:20</text><text x="501.6" y="467.5" text-anchor="middle">9:10</text><text x="545.4" y="467.5" text-anchor="middle">10:00</text><text x="589.2" y="467.5" text-anchor="middle">10:50</text><text x="633" y="467.5" text-anchor="middle">11:40</text><text x="676.8" y="467.5" text-anchor="middle">12:30</text><text x="720.5" y="467.5" text-anchor="middle">13:20</text><text x="764.3" y="467.5" text-anchor="middle">14:10</text><text x="808.1" y="467.5" text-anchor="middle">15:00</text><text x="851.9" y="467.5" text-anchor="middle">15:50</text></g><path d="M982 183L991 196V230L1002 243V377L983 436H982Z" fill="#1c1c1c"/><path d="M982.5 186V436" stroke="#767676" stroke-dasharray="3 2" stroke-width="1" shape-rendering="crispEdges"/><circle cx="990.5" cy="248.5" r="4.3" fill="#c8c8c8"/><path d="M993.5 252L998.5 257" stroke="#c8c8c8" stroke-width="2" stroke-linecap="round"/><path d="M988 248.5H993M990.5 246V251" stroke="#1c1c1c" stroke-width="1.2"/><rect x="989.5" y="265" width="5" height="91" rx="2" fill="#9a9a9a"/><rect x="990.5" y="266" width="3" height="89" rx="1.5" fill="#000"/><circle cx="992.5" cy="339" r="7.2" fill="url(#knob)"/><circle cx="995" cy="369.5" r="4.3" fill="#c8c8c8"/><path d="M992 372.5L987 377.5" stroke="#c8c8c8" stroke-width="2" stroke-linecap="round"/><path d="M992.5 369.5H997.5" stroke="#1c1c1c" stroke-width="1.2"/><path d="M984 394L996 383.5L1001.5 383V400.5L984 412Z" fill="#303030" stroke="#0a0a0a" stroke-width="1"/><path d="M984 413.5L1001.5 402.5V420L984 435Z" fill="#2a2a2a" stroke="#0a0a0a" stroke-width="1"/><path d="M986.5 398.5L990.5 392.5H998L994 398.5Z" fill="url(#sp)"/><path d="M996 404L1001.5 397V404Z" fill="#30a0f0"/><path d="M986 416.5L987.5 415L988.5 413.5L989.5 415L990.5 412L991.5 414L992.5 413L993.5 414.5L995 415.5L998 416.5L995 417.5L993.5 418.5L992.5 420L991.5 419L990.5 421L989.5 418L988.5 419.5L987.5 418Z" fill="#4aa0f4"/><path d="M21 473H233L227 480.5H187L177 491H42Z" fill="#1c1c1c"/><path d="M44 482.5L45.5 481L46.5 478.5L47.5 480.5L48.5 477L49.5 479.5L50.5 478L51.5 479L52.5 476L53.5 478L54.5 479.5L55.5 478.5L56.5 480.5L58 481L61.5 482.5L58 484L56.5 484.5L55.5 486.5L54.5 485.5L53.5 487L52.5 489L51.5 486L50.5 487L49.5 485.5L48.5 488L47.5 484.5L46.5 486.5L45.5 484Z" fill="#5aaaf6"/><rect x="65" y="480" width="90" height="5" rx="2.5" fill="#4a4a4a"/><rect x="66" y="481" width="88" height="3" rx="1.5" fill="#000"/><rect x="110" y="480" width="1" height="5" fill="#c0c0c0"/><rect x="66" y="484" width="88" height="1" fill="#8a8a8a" fill-opacity="0.6"/><circle cx="133.2" cy="482.5" r="7.2" fill="url(#knob)"/><path d="M160.5 487L167.5 477H173.5L166.5 487Z" fill="url(#sp)"/><path d="M168.5 487L175.5 477H179.5L172.5 487Z" fill="url(#sp)"/><path d="M625 473H836L821 491H684L673 480.5H632Z" fill="#1c1c1c"/><circle cx="689.5" cy="480" r="4.2" fill="#c8c8c8"/><path d="M692.5 483L697 488" stroke="#c8c8c8" stroke-width="2" stroke-linecap="round"/><path d="M687 480H692" stroke="#1c1c1c" stroke-width="1.2"/><rect x="700" y="480" width="95" height="5" rx="2.5" fill="#4a4a4a"/><rect x="701" y="481" width="93" height="3" rx="1.5" fill="#000"/><rect x="701" y="484" width="93" height="1" fill="#8a8a8a" fill-opacity="0.6"/><circle cx="706" cy="482.5" r="7.2" fill="url(#knob)"/><circle cx="811.5" cy="479.5" r="4.2" fill="#c8c8c8"/><path d="M808.5 482.5L804 488" stroke="#c8c8c8" stroke-width="2" stroke-linecap="round"/><path d="M809 479.5H814M811.5 477V482" stroke="#1c1c1c" stroke-width="1.2"/><g stroke="#c4c4c4" stroke-width="1.3" fill="#c4c4c4"><path d="M937.5 473.5L930.5 468.5M937.5 473.5L940 465.5M937.5 473.5L949 474M937.5 473.5L930.3 478.8M937.5 473.5L941.3 486"/><circle cx="937.5" cy="473.5" r="2.2" stroke="none"/><circle cx="930.5" cy="468.5" r="1.4" stroke="none"/><circle cx="940" cy="465.3" r="1.5" stroke="none"/><circle cx="949.2" cy="474" r="1.2" stroke="none"/><circle cx="930.2" cy="478.8" r="1.4" stroke="none"/><circle cx="941.4" cy="486.3" r="1.4" stroke="none"/></g><text x="946.5" y="483" font-size="12" font-weight="bold" fill="#c4c4c4" letter-spacing="1.45">iZotope</text></svg>
<svg id="bot" width="1013" height="474" viewBox="0 500 1013 474"><defs><pattern id="hatch2" width="4" height="4" patternUnits="userSpaceOnUse"><rect width="4" height="4" fill="#1b171a"/><path d="M-1 -1L5 5M-1 3L1 5M3 -1L5 1" stroke="#383334" stroke-width="1.3" fill="none"/></pattern><pattern id="grid6" width="6" height="6" patternUnits="userSpaceOnUse"><path d="M0 0.5H6M0.5 0V6" stroke="#ffffff" stroke-opacity="0.035" stroke-width="1" fill="none"/></pattern><linearGradient id="tb" x1="0" y1="0" x2="1" y2="0"><stop offset="0" stop-color="#0a246a"/><stop offset="1" stop-color="#a6caf0"/></linearGradient><linearGradient id="fr" x1="0" y1="0" x2="0" y2="1"><stop offset="0" stop-color="#464646"/><stop offset="0.5" stop-color="#383838"/><stop offset="1" stop-color="#212121"/></linearGradient><linearGradient id="pn" x1="0" y1="0" x2="0" y2="1"><stop offset="0" stop-color="#2d2d2d"/><stop offset="0.1" stop-color="#292929"/><stop offset="1" stop-color="#131313"/></linearGradient></defs><g shape-rendering="crispEdges"><rect x="0" y="500" width="1013" height="474" fill="#d4d0c8"/><rect x="1" y="501" width="1011" height="3" fill="#ffffff"/><rect x="1" y="501" width="2" height="471" fill="#ffffff"/><rect x="1" y="501" width="1" height="471" fill="#e4e0d8"/><rect x="1010" y="502" width="2" height="470" fill="#e6e2da"/><rect x="2" y="970" width="1010" height="2" fill="#e6e2da"/><rect x="1012" y="500" width="1" height="474" fill="#5c5c5c"/><rect x="0" y="972" width="1013" height="2" fill="#5c5c5c"/><rect x="3" y="504" width="1007" height="15" fill="url(#tb)"/><rect x="3" y="521" width="1007" height="449" fill="url(#hatch2)"/><rect x="43" y="521" width="927" height="449" fill="url(#fr)"/><rect x="52" y="529" width="909" height="431" fill="#2c2c2c" fill-opacity="0.6"/><rect x="53" y="530" width="907" height="429" fill="#000"/><rect x="55" y="532" width="903" height="425" fill="url(#pn)"/><rect x="55" y="532" width="903" height="425" fill="url(#grid6)"/><rect x="55" y="531" width="903" height="1" fill="#505050"/><rect x="55" y="532" width="1" height="425" fill="#3a3a3a" fill-opacity="0.6"/><rect x="53" y="959" width="908" height="1" fill="#4a4a4a"/><rect x="960" y="531" width="1" height="429" fill="#4a4a4a"/><rect x="63" y="917" width="887" height="18" fill="#1e1e1e"/><rect x="923" y="565" width="27" height="352" fill="#1d1d1d"/><rect x="63" y="565" width="860" height="352" fill="#000"/><rect x="63" y="570" width="860" height="1" fill="#282828"/><rect x="63" y="575" width="860" height="1" fill="#282828"/><rect x="63" y="581" width="860" height="1" fill="#282828"/><rect x="63" y="586" width="860" height="1" fill="#282828"/><rect x="63" y="592" width="860" height="1" fill="#464646"/><rect x="63" y="598" width="860" height="1" fill="#282828"/><rect x="63" y="603" width="860" height="1" fill="#282828"/><rect x="63" y="609" width="860" height="1" fill="#282828"/><rect x="63" y="614" width="860" height="1" fill="#282828"/><rect x="63" y="620" width="860" height="1" fill="#464646"/><rect x="63" y="626" width="860" height="1" fill="#282828"/><rect x="63" y="631" width="860" height="1" fill="#282828"/><rect x="63" y="637" width="860" height="1" fill="#282828"/><rect x="63" y="642" width="860" height="1" fill="#282828"/><rect x="63" y="648" width="860" height="1" fill="#464646"/><rect x="63" y="654" width="860" height="1" fill="#282828"/><rect x="63" y="659" width="860" height="1" fill="#282828"/><rect x="63" y="665" width="860" height="1" fill="#282828"/><rect x="63" y="670" width="860" height="1" fill="#282828"/><rect x="63" y="676" width="860" height="1" fill="#464646"/><rect x="63" y="681" width="860" height="1" fill="#282828"/><rect x="63" y="687" width="860" height="1" fill="#282828"/><rect x="63" y="692" width="860" height="1" fill="#282828"/><rect x="63" y="698" width="860" height="1" fill="#282828"/><rect x="63" y="704" width="860" height="1" fill="#464646"/><rect x="63" y="709" width="860" height="1" fill="#282828"/><rect x="63" y="715" width="860" height="1" fill="#282828"/><rect x="63" y="720" width="860" height="1" fill="#282828"/><rect x="63" y="726" width="860" height="1" fill="#282828"/><rect x="63" y="731" width="860" height="1" fill="#464646"/><rect x="63" y="737" width="860" height="1" fill="#282828"/><rect x="63" y="742" width="860" height="1" fill="#282828"/><rect x="63" y="748" width="860" height="1" fill="#282828"/><rect x="63" y="753" width="860" height="1" fill="#282828"/><rect x="63" y="759" width="860" height="1" fill="#464646"/><rect x="63" y="765" width="860" height="1" fill="#282828"/><rect x="63" y="770" width="860" height="1" fill="#282828"/><rect x="63" y="776" width="860" height="1" fill="#282828"/><rect x="63" y="781" width="860" height="1" fill="#282828"/><rect x="63" y="787" width="860" height="1" fill="#464646"/><rect x="63" y="792" width="860" height="1" fill="#282828"/><rect x="63" y="798" width="860" height="1" fill="#282828"/><rect x="63" y="803" width="860" height="1" fill="#282828"/><rect x="63" y="809" width="860" height="1" fill="#282828"/><rect x="63" y="814" width="860" height="1" fill="#464646"/><rect x="63" y="820" width="860" height="1" fill="#282828"/><rect x="63" y="825" width="860" height="1" fill="#282828"/><rect x="63" y="831" width="860" height="1" fill="#282828"/><rect x="63" y="836" width="860" height="1" fill="#282828"/><rect x="63" y="842" width="860" height="1" fill="#464646"/><rect x="63" y="847" width="860" height="1" fill="#282828"/><rect x="63" y="852" width="860" height="1" fill="#282828"/><rect x="63" y="857" width="860" height="1" fill="#282828"/><rect x="63" y="862" width="860" height="1" fill="#282828"/><rect x="63" y="867" width="860" height="1" fill="#464646"/><rect x="63" y="871" width="860" height="1" fill="#282828"/><rect x="63" y="875" width="860" height="1" fill="#282828"/><rect x="63" y="880" width="860" height="1" fill="#282828"/><rect x="63" y="884" width="860" height="1" fill="#282828"/><rect x="63" y="889" width="860" height="1" fill="#464646"/><rect x="63" y="892" width="860" height="1" fill="#282828"/><rect x="63" y="895" width="860" height="1" fill="#282828"/><rect x="63" y="898" width="860" height="1" fill="#282828"/><rect x="63" y="901" width="860" height="1" fill="#282828"/><rect x="63" y="904" width="860" height="1" fill="#464646"/><rect x="63" y="905" width="860" height="1" fill="#282828"/><rect x="63" y="907" width="860" height="1" fill="#282828"/><rect x="63" y="908" width="860" height="1" fill="#282828"/><rect x="63" y="910" width="860" height="1" fill="#282828"/><rect x="63" y="911" width="860" height="1" fill="#464646"/><rect x="63" y="912" width="860" height="1" fill="#282828"/><rect x="63" y="913" width="860" height="1" fill="#282828"/><rect x="63" y="913" width="860" height="1" fill="#282828"/><rect x="63" y="914" width="860" height="1" fill="#282828"/><rect x="63" y="914" width="860" height="1" fill="#464646"/><rect x="64" y="565" width="1" height="352" fill="#484848"/><rect x="69" y="565" width="1" height="352" fill="#4e4e4e"/><rect x="74" y="565" width="1" height="352" fill="#4e4e4e"/><rect x="85" y="565" width="1" height="352" fill="#4e4e4e"/><rect x="113" y="565" width="1" height="352" fill="#4e4e4e"/><rect x="149" y="565" width="1" height="352" fill="#4e4e4e"/><rect x="200" y="565" width="1" height="352" fill="#383838"/><rect x="236" y="565" width="1" height="352" fill="#383838"/><rect x="264" y="565" width="1" height="352" fill="#383838"/><rect x="287" y="565" width="1" height="352" fill="#4e4e4e"/><rect x="306" y="565" width="1" height="352" fill="#383838"/><rect x="323" y="565" width="1" height="352" fill="#383838"/><rect x="337" y="565" width="1" height="352" fill="#383838"/><rect x="350" y="565" width="1" height="352" fill="#383838"/><rect x="362" y="565" width="1" height="352" fill="#4e4e4e"/><rect x="409" y="565" width="1" height="352" fill="#383838"/><rect x="443" y="565" width="1" height="352" fill="#4e4e4e"/><rect x="492" y="565" width="1" height="352" fill="#383838"/><rect x="527" y="565" width="1" height="352" fill="#383838"/><rect x="554" y="565" width="1" height="352" fill="#4e4e4e"/><rect x="577" y="565" width="1" height="352" fill="#383838"/><rect x="596" y="565" width="1" height="352" fill="#383838"/><rect x="612" y="565" width="1" height="352" fill="#383838"/><rect x="627" y="565" width="1" height="352" fill="#383838"/><rect x="640" y="565" width="1" height="352" fill="#4e4e4e"/><rect x="690" y="565" width="1" height="352" fill="#383838"/><rect x="726" y="565" width="1" height="352" fill="#4e4e4e"/><rect x="776" y="565" width="1" height="352" fill="#383838"/><rect x="812" y="565" width="1" height="352" fill="#383838"/><rect x="840" y="565" width="1" height="352" fill="#4e4e4e"/><rect x="863" y="565" width="1" height="352" fill="#383838"/><rect x="882" y="565" width="1" height="352" fill="#383838"/><rect x="899" y="565" width="1" height="352" fill="#383838"/><rect x="913" y="565" width="1" height="352" fill="#383838"/><rect x="63" y="916" width="861" height="1" fill="#b4b4b4"/><rect x="922" y="565" width="1" height="352" fill="#b4b4b4"/><rect x="63" y="916" width="2" height="4" fill="#b4b4b4"/><rect x="69" y="917" width="1" height="3" fill="#b4b4b4"/><rect x="74" y="917" width="1" height="3" fill="#b4b4b4"/><rect x="85" y="917" width="1" height="3" fill="#b4b4b4"/><rect x="113" y="917" width="1" height="3" fill="#b4b4b4"/><rect x="149" y="917" width="1" height="3" fill="#b4b4b4"/><rect x="200" y="917" width="1" height="2" fill="#b4b4b4"/><rect x="236" y="917" width="1" height="2" fill="#b4b4b4"/><rect x="264" y="917" width="1" height="2" fill="#b4b4b4"/><rect x="287" y="917" width="1" height="3" fill="#b4b4b4"/><rect x="306" y="917" width="1" height="2" fill="#b4b4b4"/><rect x="323" y="917" width="1" height="2" fill="#b4b4b4"/><rect x="337" y="917" width="1" height="2" fill="#b4b4b4"/><rect x="350" y="917" width="1" height="2" fill="#b4b4b4"/><rect x="362" y="917" width="1" height="3" fill="#b4b4b4"/><rect x="409" y="917" width="1" height="2" fill="#b4b4b4"/><rect x="443" y="917" width="1" height="3" fill="#b4b4b4"/><rect x="492" y="917" width="1" height="2" fill="#b4b4b4"/><rect x="527" y="917" width="1" height="2" fill="#b4b4b4"/><rect x="554" y="917" width="1" height="3" fill="#b4b4b4"/><rect x="577" y="917" width="1" height="2" fill="#b4b4b4"/><rect x="596" y="917" width="1" height="2" fill="#b4b4b4"/><rect x="612" y="917" width="1" height="2" fill="#b4b4b4"/><rect x="627" y="917" width="1" height="2" fill="#b4b4b4"/><rect x="640" y="917" width="1" height="3" fill="#b4b4b4"/><rect x="690" y="917" width="1" height="2" fill="#b4b4b4"/><rect x="726" y="917" width="1" height="3" fill="#b4b4b4"/><rect x="776" y="917" width="1" height="2" fill="#b4b4b4"/><rect x="812" y="917" width="1" height="2" fill="#b4b4b4"/><rect x="840" y="917" width="1" height="3" fill="#b4b4b4"/><rect x="863" y="917" width="1" height="2" fill="#b4b4b4"/><rect x="882" y="917" width="1" height="2" fill="#b4b4b4"/><rect x="899" y="917" width="1" height="2" fill="#b4b4b4"/><rect x="913" y="917" width="1" height="2" fill="#b4b4b4"/><rect x="923" y="565" width="4" height="1" fill="#b4b4b4"/><rect x="923" y="570" width="1" height="1" fill="#b4b4b4"/><rect x="923" y="575" width="1" height="1" fill="#b4b4b4"/><rect x="923" y="581" width="1" height="1" fill="#b4b4b4"/><rect x="923" y="586" width="1" height="1" fill="#b4b4b4"/><rect x="923" y="592" width="4" height="1" fill="#b4b4b4"/><rect x="923" y="598" width="1" height="1" fill="#b4b4b4"/><rect x="923" y="603" width="1" height="1" fill="#b4b4b4"/><rect x="923" y="609" width="1" height="1" fill="#b4b4b4"/><rect x="923" y="614" width="1" height="1" fill="#b4b4b4"/><rect x="923" y="620" width="4" height="1" fill="#b4b4b4"/><rect x="923" y="626" width="1" height="1" fill="#b4b4b4"/><rect x="923" y="631" width="1" height="1" fill="#b4b4b4"/><rect x="923" y="637" width="1" height="1" fill="#b4b4b4"/><rect x="923" y="642" width="1" height="1" fill="#b4b4b4"/><rect x="923" y="648" width="4" height="1" fill="#b4b4b4"/><rect x="923" y="654" width="1" height="1" fill="#b4b4b4"/><rect x="923" y="659" width="1" height="1" fill="#b4b4b4"/><rect x="923" y="665" width="1" height="1" fill="#b4b4b4"/><rect x="923" y="670" width="1" height="1" fill="#b4b4b4"/><rect x="923" y="676" width="4" height="1" fill="#b4b4b4"/><rect x="923" y="681" width="1" height="1" fill="#b4b4b4"/><rect x="923" y="687" width="1" height="1" fill="#b4b4b4"/><rect x="923" y="692" width="1" height="1" fill="#b4b4b4"/><rect x="923" y="698" width="1" height="1" fill="#b4b4b4"/><rect x="923" y="704" width="4" height="1" fill="#b4b4b4"/><rect x="923" y="709" width="1" height="1" fill="#b4b4b4"/><rect x="923" y="715" width="1" height="1" fill="#b4b4b4"/><rect x="923" y="720" width="1" height="1" fill="#b4b4b4"/><rect x="923" y="726" width="1" height="1" fill="#b4b4b4"/><rect x="923" y="731" width="4" height="1" fill="#b4b4b4"/><rect x="923" y="737" width="1" height="1" fill="#b4b4b4"/><rect x="923" y="742" width="1" height="1" fill="#b4b4b4"/><rect x="923" y="748" width="1" height="1" fill="#b4b4b4"/><rect x="923" y="753" width="1" height="1" fill="#b4b4b4"/><rect x="923" y="759" width="4" height="1" fill="#b4b4b4"/><rect x="923" y="765" width="1" height="1" fill="#b4b4b4"/><rect x="923" y="770" width="1" height="1" fill="#b4b4b4"/><rect x="923" y="776" width="1" height="1" fill="#b4b4b4"/><rect x="923" y="781" width="1" height="1" fill="#b4b4b4"/><rect x="923" y="787" width="4" height="1" fill="#b4b4b4"/><rect x="923" y="792" width="1" height="1" fill="#b4b4b4"/><rect x="923" y="798" width="1" height="1" fill="#b4b4b4"/><rect x="923" y="803" width="1" height="1" fill="#b4b4b4"/><rect x="923" y="809" width="1" height="1" fill="#b4b4b4"/><rect x="923" y="814" width="4" height="1" fill="#b4b4b4"/><rect x="923" y="820" width="1" height="1" fill="#b4b4b4"/><rect x="923" y="825" width="1" height="1" fill="#b4b4b4"/><rect x="923" y="831" width="1" height="1" fill="#b4b4b4"/><rect x="923" y="836" width="1" height="1" fill="#b4b4b4"/><rect x="923" y="842" width="4" height="1" fill="#b4b4b4"/><rect x="923" y="847" width="1" height="1" fill="#b4b4b4"/><rect x="923" y="852" width="1" height="1" fill="#b4b4b4"/><rect x="923" y="857" width="1" height="1" fill="#b4b4b4"/><rect x="923" y="862" width="1" height="1" fill="#b4b4b4"/><rect x="923" y="867" width="4" height="1" fill="#b4b4b4"/><rect x="923" y="871" width="1" height="1" fill="#b4b4b4"/><rect x="923" y="875" width="1" height="1" fill="#b4b4b4"/><rect x="923" y="880" width="1" height="1" fill="#b4b4b4"/><rect x="923" y="884" width="1" height="1" fill="#b4b4b4"/><rect x="923" y="889" width="4" height="1" fill="#b4b4b4"/><rect x="923" y="892" width="1" height="1" fill="#b4b4b4"/><rect x="923" y="895" width="1" height="1" fill="#b4b4b4"/><rect x="923" y="898" width="1" height="1" fill="#b4b4b4"/><rect x="923" y="901" width="1" height="1" fill="#b4b4b4"/><rect x="923" y="904" width="4" height="1" fill="#b4b4b4"/><rect x="923" y="911" width="4" height="1" fill="#b4b4b4"/><rect x="923" y="914" width="4" height="1" fill="#b4b4b4"/><rect x="923" y="913" width="4" height="2" fill="#b4b4b4"/></g><polyline points="63.1,663.6 111.3,655.4 146,657.2 173,665.2 230.7,676.4 244.8,674.9 258.1,666.7 269.7,664.4 281.3,670.8 300,686.3 308.9,688.2 316.8,689.2 323.7,689.2 330.6,682.7 343.8,679.2 355.7,690.4 361.2,687.6 366.1,690.4 371.5,696.5 381,695.7 390.2,679.7 394.4,684.7 398.7,695.5 402.1,696.1 410,684.9 413.5,688.6 417.3,696.1 420.8,692.6 423.8,685.7 427,689.6 430.3,700.5 432.9,704 436.2,699.5 439.2,696.7 444.1,696.7 450.4,698.5 455.4,702.4 458.9,699.7 464.9,701.5 467.4,700.5 472.2,693.6 478.7,697.9 482.6,698.3 488.9,702.6 492.6,694.8 495,698.5 497.9,704.7 502.8,706.3 507.2,699.7 510.7,707.6 514.7,713 517.6,711.6 520.6,708 525.5,713.2 528.5,711.6 532.4,713.2 537.8,718.5 542.9,714.7 544.9,715.9 547.3,713.6 550.2,717.5 552.8,717.5 555.2,712 558.7,721.9 560.5,720.3 564,728.4 567,725 569,725 570.9,721.9 572.9,725.8 575.3,721.9 579.2,720.9 582.8,725.8 584.4,725 586.7,730.9 589.7,728.4 591.7,722.4 594.2,729.8 597.6,730.3 599.2,728.4 603.5,735.3 606.5,729.8 609.8,735.7 613.8,729.4 617,736.9 620.3,733.3 622.7,732.9 624.3,730.9 625.2,732.9 626.6,729.4 630.2,733.7 633.1,734.9 637.1,738.2 639.5,741.6 641.4,737.7 643,739.6 644.6,738.4 649.5,745.2 651.9,742.4 654.3,746.7 655.8,744.4 658.2,750.1 659.4,748.7 662.2,751.1 665.7,758 668.7,760.6 670.1,759.4 672,762.5 673.6,757 675.6,760 679.1,757.4 680.5,760 682.5,762.2 684.9,763.4 687.4,761.7 691.1,767.1 692.8,764.7 694.8,768.4 697.3,765.2 699.2,766.2 700.7,760.5 703.9,770.1 705.9,769.1 708.4,771.6 712.1,770.6 714.6,772.1 718.3,771.1 722,775.8 725.2,780.7 728.1,779 735.5,779 741.7,780.5 747.9,783.9 753.3,788.6 754.3,775.8 755.3,790.6 757,794.3 759,801.2 761,804.7 764.7,800.5 766.9,802.9 768.8,801.2 773.3,805.4 777.5,812.8 784.9,828.8 788.6,833.8 791.6,832.5 798.5,837.5 805.9,847.4 810.1,849.8 816.5,860.2 824.4,862.7 830.5,867.6 835.5,869.6 839.9,868.3 844.1,873.3 848.6,879.4 850.8,878.7 852.8,880.7 856.5,879.4 860.2,874.5 863.9,867.1 870,852.3 877.4,835 884.8,819 892.2,805.4 899.6,796.3 907,790.6 914.5,787.6 921.9,786.4" fill="none" stroke="#c8e000" stroke-width="1.35" stroke-linejoin="round"/><rect x="67.5" y="538.5" width="64" height="17" rx="2" fill="#333333" stroke="#9c9c9c" stroke-width="1"/><rect x="927.5" y="539.5" width="19" height="19" rx="2" fill="#333333" stroke="#9c9c9c" stroke-width="1"/><g font-size="11" fill="#b8b8b8" letter-spacing="-0.1"><text x="99.5" y="551" text-anchor="middle">Settings</text><text x="937" y="553" text-anchor="middle">?</text><text x="929" y="578">dB</text><text x="929.4" y="596.2">10</text><text x="929.4" y="624.2">20</text><text x="929.4" y="652.1">30</text><text x="929.4" y="679.9">40</text><text x="929.4" y="707.7">50</text><text x="929.4" y="735.5">60</text><text x="929.4" y="763.1">70</text><text x="929.4" y="790.8">80</text><text x="929.4" y="818.5">90</text><text x="929.4" y="845.6">100</text><text x="929.4" y="870.7">110</text><text x="929.4" y="892.7">120</text><text x="929.4" y="907.7">130</text><text x="74.6" y="931" text-anchor="middle">10</text><rect x="66" y="921" width="8" height="12" fill="#1e1e1e"/><text x="70.1" y="931" text-anchor="middle">5</text><text x="85.9" y="931" text-anchor="middle">20</text><text x="113.8" y="931" text-anchor="middle">50</text><text x="149.8" y="931" text-anchor="middle">100</text><text x="287.8" y="931" text-anchor="middle">500</text><text x="362.8" y="931" text-anchor="middle">1000</text><text x="444" y="931" text-anchor="middle">2000</text><text x="554.8" y="931" text-anchor="middle">5000</text><text x="640.8" y="931" text-anchor="middle">10000</text><text x="726.6" y="931" text-anchor="middle">20000</text><text x="840.9" y="931" text-anchor="middle">50000</text></g><g font-size="11" fill="#c4c4c4" letter-spacing="-0.1"><text x="676.5" y="950">Anchor sample</text><text x="786.5" y="950">Selection</text><text x="869.5" y="950">Playback</text></g><rect x="754" y="943.5" width="16" height="5" rx="1.5" fill="#000"/><rect x="755" y="944" width="15" height="4" rx="1" fill="#00a8ff"/><rect x="837" y="943.5" width="16" height="5" rx="1.5" fill="#000"/><rect x="838" y="944" width="15" height="4" rx="1" fill="#ccff00"/><rect x="919" y="943.5" width="16" height="5" rx="1.5" fill="#000"/><rect x="920" y="944" width="15" height="4" rx="1" fill="#b400ff"/><text x="5" y="515.7" font-size="11" font-weight="bold" fill="#ffffff" letter-spacing="0.5">Spectrum Analyzer</text><g shape-rendering="crispEdges"><rect x="998" y="506" width="10" height="10" fill="#d4d0c8"/><rect x="998" y="506" width="10" height="1" fill="#fff"/><rect x="998" y="506" width="1" height="10" fill="#fff"/><rect x="998" y="515" width="10" height="1" fill="#404040"/><rect x="1007" y="506" width="1" height="10" fill="#404040"/><rect x="999" y="514" width="8" height="1" fill="#808080"/><rect x="1006" y="507" width="1" height="8" fill="#808080"/></g><path d="M1000.5 508.5L1005.5 513.5M1005.5 508.5L1000.5 513.5" stroke="#000" stroke-width="1.3"/></svg>
</body></html>
